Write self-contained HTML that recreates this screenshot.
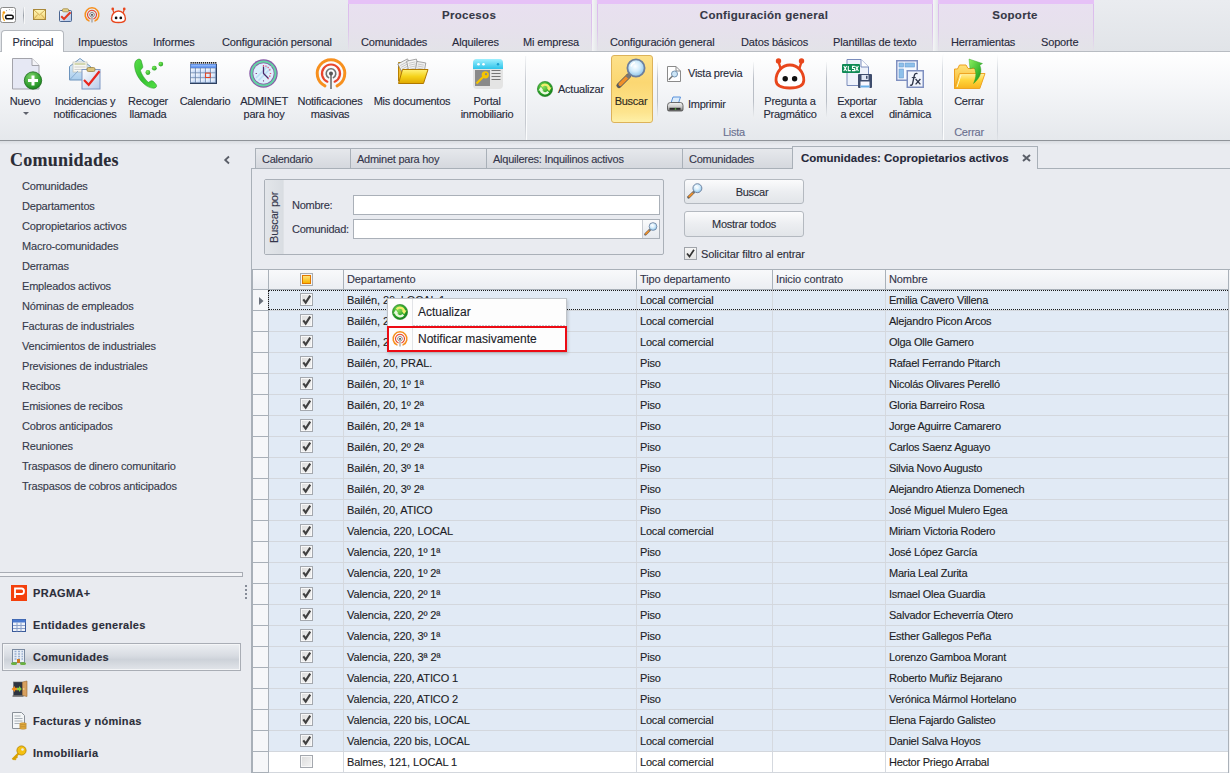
<!DOCTYPE html><html><head><meta charset="utf-8"><style>
*{box-sizing:border-box}
html,body{margin:0;padding:0}
body{width:1230px;height:773px;overflow:hidden;position:relative;background:#e9ebf0;font-family:"Liberation Sans",sans-serif;}
.t{position:absolute;white-space:nowrap;line-height:1;-webkit-text-stroke:0.12px currentColor}
.b{position:absolute;}
svg{position:absolute;overflow:visible}
</style></head><body>
<div class="b" style="left:0px;top:0px;width:1230px;height:51px;background:linear-gradient(#eaecf0,#e1e4e8)"></div>
<div class="b" style="left:0px;top:51px;width:1230px;height:1px;background:#b8bcc2"></div>
<div class="b" style="left:348px;top:0px;width:244px;height:51px;background:linear-gradient(#e9e0f1,#e6e1ec 60%,#e3e3e8)"></div>
<div class="b" style="left:348px;top:0px;width:1px;height:51px;background:linear-gradient(#dcb8ee,#dcc4ea 60%,rgba(220,200,234,0))"></div>
<div class="b" style="left:591px;top:0px;width:1px;height:51px;background:linear-gradient(#dcb8ee,#dcc4ea 60%,rgba(220,200,234,0))"></div>
<div class="b" style="left:348px;top:0px;width:244px;height:4px;background:#e6c1f7"></div>
<div class="t" style="left:319px;width:300px;text-align:center;top:10.26px;font-size:11.5px;color:#363846;font-weight:bold;letter-spacing:0.3px;">Procesos</div>
<div class="b" style="left:597px;top:0px;width:336px;height:51px;background:linear-gradient(#e9e0f1,#e6e1ec 60%,#e3e3e8)"></div>
<div class="b" style="left:597px;top:0px;width:1px;height:51px;background:linear-gradient(#dcb8ee,#dcc4ea 60%,rgba(220,200,234,0))"></div>
<div class="b" style="left:932px;top:0px;width:1px;height:51px;background:linear-gradient(#dcb8ee,#dcc4ea 60%,rgba(220,200,234,0))"></div>
<div class="b" style="left:597px;top:0px;width:336px;height:4px;background:#e6c1f7"></div>
<div class="t" style="left:614px;width:300px;text-align:center;top:10.26px;font-size:11.5px;color:#363846;font-weight:bold;letter-spacing:0.3px;">Configuración general</div>
<div class="b" style="left:938px;top:0px;width:156px;height:51px;background:linear-gradient(#e9e0f1,#e6e1ec 60%,#e3e3e8)"></div>
<div class="b" style="left:938px;top:0px;width:1px;height:51px;background:linear-gradient(#dcb8ee,#dcc4ea 60%,rgba(220,200,234,0))"></div>
<div class="b" style="left:1093px;top:0px;width:1px;height:51px;background:linear-gradient(#dcb8ee,#dcc4ea 60%,rgba(220,200,234,0))"></div>
<div class="b" style="left:938px;top:0px;width:156px;height:4px;background:#e6c1f7"></div>
<div class="t" style="left:865px;width:300px;text-align:center;top:10.26px;font-size:11.5px;color:#363846;font-weight:bold;letter-spacing:0.3px;">Soporte</div>
<div class="b" style="left:592px;top:0px;width:5px;height:51px;background:linear-gradient(90deg,#f4f5f6,#e4e6ea)"></div>
<div class="b" style="left:933px;top:0px;width:5px;height:51px;background:linear-gradient(90deg,#f4f5f6,#e4e6ea)"></div>
<div class="b" style="left:1px;top:30px;width:63px;height:22px;background:#fff;border:1px solid #b4b8be;border-bottom:none;border-radius:4px 4px 0 0"></div>
<div class="t " style="left:12.5px;top:36.68px;font-size:11px;color:#272a3c;font-weight:normal;letter-spacing:-0.15px;">Principal</div>
<div class="t " style="left:78px;top:36.68px;font-size:11px;color:#272a3c;font-weight:normal;letter-spacing:-0.15px;">Impuestos</div>
<div class="t " style="left:153px;top:36.68px;font-size:11px;color:#272a3c;font-weight:normal;letter-spacing:-0.15px;">Informes</div>
<div class="t " style="left:222px;top:36.68px;font-size:11px;color:#272a3c;font-weight:normal;letter-spacing:-0.15px;">Configuración personal</div>
<div class="t " style="left:361px;top:36.68px;font-size:11px;color:#272a3c;font-weight:normal;letter-spacing:-0.15px;">Comunidades</div>
<div class="t " style="left:452px;top:36.68px;font-size:11px;color:#272a3c;font-weight:normal;letter-spacing:-0.15px;">Alquileres</div>
<div class="t " style="left:523px;top:36.68px;font-size:11px;color:#272a3c;font-weight:normal;letter-spacing:-0.15px;">Mi empresa</div>
<div class="t " style="left:610px;top:36.68px;font-size:11px;color:#272a3c;font-weight:normal;letter-spacing:-0.15px;">Configuración general</div>
<div class="t " style="left:741px;top:36.68px;font-size:11px;color:#272a3c;font-weight:normal;letter-spacing:-0.15px;">Datos básicos</div>
<div class="t " style="left:833px;top:36.68px;font-size:11px;color:#272a3c;font-weight:normal;letter-spacing:-0.15px;">Plantillas de texto</div>
<div class="t " style="left:951px;top:36.68px;font-size:11px;color:#272a3c;font-weight:normal;letter-spacing:-0.15px;">Herramientas</div>
<div class="t " style="left:1041px;top:36.68px;font-size:11px;color:#272a3c;font-weight:normal;letter-spacing:-0.15px;">Soporte</div>
<div class="b" style="left:0px;top:52px;width:1230px;height:88px;background:linear-gradient(#ffffff 0%,#f6f7f9 35%,#e5e8ec 100%)"></div>
<div class="b" style="left:0px;top:140px;width:1230px;height:1px;background:#8f9399"></div>
<div class="b" style="left:0px;top:141px;width:1230px;height:4px;background:linear-gradient(#d9dce1,#e9ebf0)"></div>
<svg style="left:0px;top:7px" width="16" height="16" viewBox="0 0 16 16"><rect x="0.5" y="0.5" width="15" height="15" rx="2" fill="#fff" stroke="#8a8a8a"/><circle cx="3.9" cy="5.6" r="1.3" fill="#f29a12"/><path d="M3.2 6.5C2.4 9 2.8 11.5 4.6 13.8" stroke="#f4a61e" stroke-width="1.3" fill="none"/><rect x="5.6" y="8.2" width="7.6" height="3.6" rx="1.8" fill="none" stroke="#111" stroke-width="1.5"/><circle cx="6.5" cy="3.6" r="0.6" fill="#999"/><circle cx="9.4" cy="2.6" r="0.6" fill="#aaa"/><circle cx="12" cy="3.2" r="0.6" fill="#aaa"/><circle cx="13.5" cy="5.3" r="0.5" fill="#bbb"/></svg>
<div class="b" style="left:23px;top:7px;width:1px;height:17px;background:linear-gradient(#e4e6ea,#9aa0a8,#e4e6ea)"></div>
<div class="b" style="left:24px;top:7px;width:1px;height:17px;background:#f6f7f8"></div>
<svg style="left:33px;top:9px" width="13" height="11" viewBox="0 0 13 11"><defs><linearGradient id="env" x1="0" y1="0" x2="0" y2="1"><stop offset="0" stop-color="#fff8b8"/><stop offset="1" stop-color="#f2d478"/></linearGradient></defs><rect x="0.5" y="0.5" width="12" height="10" fill="url(#env)" stroke="#a8883a"/><path d="M0.8 0.8L6.5 6L12.2 0.8M0.8 10L4.8 5.5M12.2 10L8.2 5.5" stroke="#c9a04a" fill="none" stroke-width="0.9"/></svg>
<svg style="left:59px;top:8px" width="13" height="14" viewBox="0 0 13 14"><defs><linearGradient id="cbq" x1="0" y1="0" x2="1" y2="1"><stop offset="0" stop-color="#f8fbff"/><stop offset="1" stop-color="#aec3e6"/></linearGradient></defs><rect x="0.5" y="2.5" width="12" height="11" rx="1" fill="url(#cbq)" stroke="#4a6591"/><rect x="3.5" y="0.8" width="6" height="3" rx="1" fill="#e8d48a" stroke="#a08840" stroke-width="0.8"/><path d="M2.2 8.2L5 11L11.5 4.2" stroke="#e23a22" stroke-width="2" fill="none"/></svg>
<svg style="left:84px;top:7px" width="16" height="16" viewBox="0 0 16 16"><g transform="scale(0.5)"><path d="M9.95 27.90A13.8 13.8 0 1 1 22.05 27.90" fill="none" stroke="#f7901e" stroke-width="3" stroke-linecap="round"/><path d="M12.34 23.72A9 9 0 1 1 19.66 23.72" fill="none" stroke="#e8452c" stroke-width="2.2" stroke-linecap="round"/><path d="M13.60 19.66A4.8 4.8 0 1 1 18.40 19.66" fill="none" stroke="#707070" stroke-width="1.6" stroke-linecap="round"/><rect x="15" y="15.5" width="2" height="15.5" fill="#8a8a8a"/><circle cx="16" cy="15.5" r="2" fill="#555"/></g></svg>
<svg style="left:110px;top:7px" width="16" height="16" viewBox="0 0 16 16"><g transform="scale(0.5)"><path d="M5.6 5L7.6 11.5M28.4 5L26.4 11.5" stroke="#e8461c" stroke-width="2.4" fill="none"/><circle cx="5.5" cy="3.9" r="2.7" fill="#e8461c"/><circle cx="28.5" cy="3.9" r="2.7" fill="#e8461c"/><path d="M16.9 8C9 8 3 15 3 23.3C3 29 9.5 31 16.9 31C24.3 31 30.8 29 30.8 23.3C30.8 15 24.8 8 16.9 8Z" fill="#fff" stroke="#e8461c" stroke-width="2.8"/><circle cx="12.2" cy="21.8" r="2.7" fill="#111"/><circle cx="21.6" cy="21.8" r="2.7" fill="#111"/></g></svg>
<svg style="left:12px;top:58px" width="28" height="32" viewBox="0 0 28 32"><path d="M0.5 0.5H20L27 7.5V31H0.5Z" fill="#e6e8f4" stroke="#a3a3aa"/><path d="M20 0.5V7.5H27" fill="#f4f4f8" stroke="#a3a3aa"/><defs><radialGradient id="gp" cx="0.4" cy="0.3" r="0.8"><stop offset="0" stop-color="#7ed36a"/><stop offset="0.7" stop-color="#2b9a2b"/><stop offset="1" stop-color="#16701a"/></radialGradient></defs><circle cx="21" cy="22.5" r="8.7" fill="url(#gp)" stroke="#1f6a20" stroke-width="0.8"/><path d="M21 17.5V27.5M16 22.5H26" stroke="#fff" stroke-width="3"/></svg>
<div class="t" style="left:-125px;width:300px;text-align:center;top:95.68px;font-size:11px;color:#272a3a;font-weight:normal;letter-spacing:-0.25px;">Nuevo</div>
<svg style="left:22.5px;top:112px" width="6" height="4" viewBox="0 0 6 4"><path d="M0 0H6L3 3Z" fill="#5e626c"/></svg>
<svg style="left:69px;top:58px" width="32" height="32" viewBox="0 0 32 32"><defs><linearGradient id="ev2" x1="0" y1="0" x2="0" y2="1"><stop offset="0" stop-color="#eaf4fc"/><stop offset="1" stop-color="#a9cdec"/></linearGradient></defs><path d="M0.5 8.5L11 0.5L21.5 8.5V22H0.5Z" fill="url(#ev2)" stroke="#6c94bd"/><rect x="4" y="4" width="14" height="10" fill="#f7f7f2" stroke="#b8b8a8" stroke-width="0.6"/><path d="M5.5 6h11" stroke="#b0b870" stroke-width="1"/><path d="M5.5 9h11M5.5 11.5h11" stroke="#c8c8c8" stroke-width="0.8"/><path d="M0.5 22L9 13M21.5 22L13 13" stroke="#7aa0c8" stroke-width="0.8"/><g transform="translate(12.5,9)"><defs><linearGradient id="cbi" x1="0" y1="0" x2="1" y2="1"><stop offset="0" stop-color="#ffffff"/><stop offset="1" stop-color="#b8cbea"/></linearGradient></defs><rect x="0.5" y="2.5" width="18" height="19.5" fill="url(#cbi)" stroke="#7f98c4"/><rect x="5.5" y="0.5" width="8" height="4" rx="1.5" fill="#d9c27a" stroke="#9a8040" stroke-width="0.8"/><path d="M2.5 13L7.2 17.8L18 4.2" stroke="#e8261e" stroke-width="2.2" fill="none"/></g></svg>
<div class="t" style="left:-65px;width:300px;text-align:center;top:95.68px;font-size:11px;color:#272a3a;font-weight:normal;letter-spacing:-0.25px;">Incidencias y</div>
<div class="t" style="left:-65px;width:300px;text-align:center;top:108.68px;font-size:11px;color:#272a3a;font-weight:normal;letter-spacing:-0.25px;">notificaciones</div>
<svg style="left:133px;top:58px" width="32" height="32" viewBox="0 0 32 32"><defs><linearGradient id="ph" x1="0" y1="0" x2="1" y2="1"><stop offset="0" stop-color="#5ae04a"/><stop offset="0.5" stop-color="#34c030"/><stop offset="1" stop-color="#52e046"/></linearGradient><radialGradient id="pd" cx="0.4" cy="0.35" r="0.7"><stop offset="0" stop-color="#7aea5a"/><stop offset="1" stop-color="#22a020"/></radialGradient></defs><path d="M5.2 1.2C2.8 1.8 1.4 4.5 1.6 8C1.9 14 5.5 21.5 11.8 26.6C15.2 29.4 19.6 30.8 22 29.9C23.8 29.2 24 27.6 23.1 26.4L20.6 23.6C19.6 22.6 18.3 22.5 17.3 23.2L15.4 24.3C12 21.6 8.3 16 7.3 12.2L8.6 11C9.8 10.2 10 8.8 9.6 7.5L8.2 2.6C7.7 1.4 6.6 0.9 5.2 1.2Z" fill="url(#ph)" stroke="#1e8a1e" stroke-width="0.5"/><circle cx="14.9" cy="14.5" r="2.4" fill="url(#pd)"/><circle cx="21.3" cy="10.2" r="2.4" fill="url(#pd)"/><circle cx="27.8" cy="6.1" r="2.4" fill="url(#pd)"/></svg>
<div class="t" style="left:-2px;width:300px;text-align:center;top:95.68px;font-size:11px;color:#272a3a;font-weight:normal;letter-spacing:-0.25px;">Recoger</div>
<div class="t" style="left:-2px;width:300px;text-align:center;top:108.68px;font-size:11px;color:#272a3a;font-weight:normal;letter-spacing:-0.25px;">llamada</div>
<svg style="left:190px;top:62px" width="27" height="22" viewBox="0 0 27 22"><defs><linearGradient id="cell" x1="0" y1="0" x2="1" y2="1"><stop offset="0" stop-color="#ffffff"/><stop offset="1" stop-color="#b8d0f4"/></linearGradient></defs><rect x="0" y="1.8" width="27" height="20.2" fill="#6a82a6"/><rect x="0" y="21" width="27" height="1" fill="#2e4060"/><rect x="26" y="2" width="1" height="20" fill="#2e4060"/><rect x="0.6" y="2.2" width="25.6" height="3.6" fill="#5a8ff0"/><rect x="1.2" y="2.8" width="24.4" height="1.6" fill="#8ab4f8"/><rect x="0.50" y="0" width="1.3" height="1.6" fill="#1a1a1a"/><rect x="2.55" y="0" width="1.3" height="1.6" fill="#1a1a1a"/><rect x="4.60" y="0" width="1.3" height="1.6" fill="#1a1a1a"/><rect x="6.65" y="0" width="1.3" height="1.6" fill="#1a1a1a"/><rect x="8.70" y="0" width="1.3" height="1.6" fill="#1a1a1a"/><rect x="10.75" y="0" width="1.3" height="1.6" fill="#1a1a1a"/><rect x="12.80" y="0" width="1.3" height="1.6" fill="#1a1a1a"/><rect x="14.85" y="0" width="1.3" height="1.6" fill="#1a1a1a"/><rect x="16.90" y="0" width="1.3" height="1.6" fill="#1a1a1a"/><rect x="18.95" y="0" width="1.3" height="1.6" fill="#1a1a1a"/><rect x="21.00" y="0" width="1.3" height="1.6" fill="#1a1a1a"/><rect x="23.05" y="0" width="1.3" height="1.6" fill="#1a1a1a"/><rect x="25.10" y="0" width="1.3" height="1.6" fill="#1a1a1a"/><rect x="0.90" y="6.40" width="4.3" height="4.1" fill="url(#cell)"/><rect x="5.92" y="6.40" width="4.3" height="4.1" fill="url(#cell)"/><rect x="10.94" y="6.40" width="4.3" height="4.1" fill="url(#cell)"/><rect x="15.96" y="6.40" width="4.3" height="4.1" fill="url(#cell)"/><rect x="20.98" y="6.40" width="4.3" height="4.1" fill="url(#cell)"/><rect x="0.90" y="11.30" width="4.3" height="4.1" fill="url(#cell)"/><rect x="5.92" y="11.30" width="4.3" height="4.1" fill="url(#cell)"/><rect x="10.94" y="11.30" width="4.3" height="4.1" fill="url(#cell)"/><rect x="15.96" y="11.30" width="4.3" height="4.1" fill="url(#cell)"/><rect x="20.98" y="11.30" width="4.3" height="4.1" fill="url(#cell)"/><rect x="0.90" y="16.20" width="4.3" height="4.1" fill="url(#cell)"/><rect x="5.92" y="16.20" width="4.3" height="4.1" fill="url(#cell)"/><rect x="10.94" y="16.20" width="4.3" height="4.1" fill="url(#cell)"/><rect x="15.96" y="16.20" width="4.3" height="4.1" fill="url(#cell)"/><rect x="20.98" y="16.20" width="4.3" height="4.1" fill="url(#cell)"/><rect x="15.6" y="11.1" width="4.6" height="4.4" fill="none" stroke="#e8401a" stroke-width="1"/></svg>
<div class="t" style="left:55px;width:300px;text-align:center;top:95.68px;font-size:11px;color:#272a3a;font-weight:normal;letter-spacing:-0.25px;">Calendario</div>
<svg style="left:249px;top:59px" width="29" height="29" viewBox="0 0 29 29"><circle cx="14.5" cy="14.5" r="14.2" fill="#8a5aa8"/><circle cx="14.5" cy="14.5" r="13" fill="#62d6a4"/><circle cx="14.5" cy="14.5" r="11" fill="#8a5aa8"/><circle cx="14.5" cy="14.5" r="10.2" fill="#dcf0fc"/><path d="M7 19L19 7M9.5 21.5L21.5 9.5" stroke="#bcdcf4" stroke-width="1.6"/><path d="M14.5 7.5V14.5L19.5 19.5" stroke="#4a2a6a" stroke-width="1.3" fill="none"/><path d="M14.5 6v1.6M17.2 6.6l-0.5 1.2M19.6 8.2l-0.9 0.9M21.4 10.6l-1.2 0.5M22.2 14.5h-1.4M21.4 17.4l-1.2 -0.5M19.6 20.2l-0.9 -0.9" stroke="#e84a78" stroke-width="1.2"/><path d="M6.6 14.5h1.4M14.5 21.2v1.4" stroke="#8a4a8a" stroke-width="1.1"/></svg>
<div class="t" style="left:114px;width:300px;text-align:center;top:95.68px;font-size:11px;color:#272a3a;font-weight:normal;letter-spacing:-0.25px;">ADMINET</div>
<div class="t" style="left:114px;width:300px;text-align:center;top:108.68px;font-size:11px;color:#272a3a;font-weight:normal;letter-spacing:-0.25px;">para hoy</div>
<svg style="left:315px;top:58px" width="32" height="32" viewBox="0 0 32 32"><g transform="scale(1.0)"><path d="M9.95 27.90A13.8 13.8 0 1 1 22.05 27.90" fill="none" stroke="#f7901e" stroke-width="3" stroke-linecap="round"/><path d="M12.34 23.72A9 9 0 1 1 19.66 23.72" fill="none" stroke="#e8452c" stroke-width="2.2" stroke-linecap="round"/><path d="M13.60 19.66A4.8 4.8 0 1 1 18.40 19.66" fill="none" stroke="#707070" stroke-width="1.6" stroke-linecap="round"/><rect x="15" y="15.5" width="2" height="15.5" fill="#8a8a8a"/><circle cx="16" cy="15.5" r="2" fill="#555"/></g></svg>
<div class="t" style="left:180px;width:300px;text-align:center;top:95.68px;font-size:11px;color:#272a3a;font-weight:normal;letter-spacing:-0.25px;">Notificaciones</div>
<div class="t" style="left:180px;width:300px;text-align:center;top:108.68px;font-size:11px;color:#272a3a;font-weight:normal;letter-spacing:-0.25px;">masivas</div>
<svg style="left:397px;top:59px" width="32" height="26" viewBox="0 0 32 26"><defs><linearGradient id="fold" x1="0" y1="0" x2="0" y2="1"><stop offset="0" stop-color="#fff27a"/><stop offset="0.5" stop-color="#f5d21a"/><stop offset="1" stop-color="#e0a800"/></linearGradient></defs><path d="M1.5 3.5H8L10 5.5H17V22H1.5Z" fill="#f0c030" stroke="#b88000"/><g transform="rotate(-28 8 8)"><rect x="3" y="2" width="11" height="13" fill="#f2f2f2" stroke="#8a8a8a" stroke-width="0.7"/><path d="M4.5 4.5h8M4.5 6.5h8M4.5 8.5h8M4.5 10.5h8" stroke="#b0b0b0" stroke-width="0.6"/></g><g transform="rotate(-12 16 8)"><rect x="11" y="1" width="10" height="13" fill="#f6f6f6" stroke="#8a8a8a" stroke-width="0.7"/><path d="M12.5 3.5h7M12.5 5.5h7M12.5 7.5h7M12.5 9.5h7" stroke="#b0b0b0" stroke-width="0.6"/></g><g transform="rotate(10 23 8)"><rect x="19" y="3" width="9" height="11" fill="#f0f0f0" stroke="#8a8a8a" stroke-width="0.7"/><path d="M20.5 5.5h6M20.5 7.5h6M20.5 9.5h6" stroke="#b0b0b0" stroke-width="0.6"/></g><path d="M5.5 10.5H31L26.5 24.5H1.5Z" fill="url(#fold)" stroke="#b07800" stroke-width="1"/></svg>
<div class="t" style="left:262px;width:300px;text-align:center;top:95.68px;font-size:11px;color:#272a3a;font-weight:normal;letter-spacing:-0.25px;">Mis documentos</div>
<svg style="left:473px;top:59px" width="30" height="30" viewBox="0 0 30 30"><defs><linearGradient id="ptop" x1="0" y1="0" x2="0" y2="1"><stop offset="0" stop-color="#9ef0ff"/><stop offset="1" stop-color="#2ec4ea"/></linearGradient></defs><rect x="0" y="0" width="30" height="30" rx="4" fill="#e4e4e4"/><path d="M0 4A4 4 0 0 1 4 0H26A4 4 0 0 1 30 4V10H0Z" fill="url(#ptop)"/><circle cx="5.5" cy="5.2" r="1.3" fill="#fff"/><circle cx="10.5" cy="5.2" r="1.3" fill="#fff"/><circle cx="25" cy="5.2" r="1.2" fill="#1aa0d0"/><rect x="2" y="11" width="15" height="16" fill="#8a8a8a"/><path d="M18.5 11.5h9M18.5 14.5h9M18.5 17.5h9M18.5 20.5h9" stroke="#666" stroke-width="0.9"/><circle cx="12.3" cy="15.8" r="3.6" fill="#f5c400"/><circle cx="13" cy="15.2" r="1.1" fill="#8a8a8a"/><path d="M10 18L3.5 24.5" stroke="#f5c400" stroke-width="2.2"/></svg>
<div class="t" style="left:337px;width:300px;text-align:center;top:95.68px;font-size:11px;color:#272a3a;font-weight:normal;letter-spacing:-0.25px;">Portal</div>
<div class="t" style="left:337px;width:300px;text-align:center;top:108.68px;font-size:11px;color:#272a3a;font-weight:normal;letter-spacing:-0.25px;">inmobiliario</div>
<div class="b" style="left:525px;top:56px;width:1px;height:84px;background:linear-gradient(#f4f5f7,#c6cad0 30%,#c6cad0 80%,#e0e3e7)"></div>
<div class="b" style="left:526px;top:56px;width:1px;height:84px;background:#fbfcfd"></div>
<svg style="left:537px;top:81px" width="16" height="16" viewBox="0 0 16 16"><g transform="scale(1.0)"><defs><radialGradient id="rga" cx="0.4" cy="0.35" r="0.7"><stop offset="0" stop-color="#8be05a"/><stop offset="0.6" stop-color="#2da52a"/><stop offset="1" stop-color="#137a1a"/></radialGradient></defs><circle cx="8" cy="8" r="7.6" fill="url(#rga)" stroke="#1d7a1d" stroke-width="0.6"/><path d="M4.6 5.2A4.4 4.4 0 0 1 12.2 7.2" stroke="#f2ee70" stroke-width="2.3" fill="none"/><path d="M9.6 6.6H14.6L12.1 10.2Z" fill="#f2ee70"/><path d="M11.4 10.8A4.4 4.4 0 0 1 3.8 8.8" stroke="#eaf8dc" stroke-width="2.3" fill="none"/><path d="M6.4 9.4H1.4L3.9 5.8Z" fill="#eaf8dc"/></g></svg>
<div class="t " style="left:558px;top:83.68px;font-size:11px;color:#272a3a;font-weight:normal;letter-spacing:-0.25px;">Actualizar</div>
<div class="b" style="left:611px;top:55px;width:42px;height:68px;background:linear-gradient(#fde18a,#fbd772 40%,#fde48e 85%,#fef0a8);border:1px solid #dcb25a;border-radius:3px"></div>
<svg style="left:616px;top:58px" width="30" height="30" viewBox="0 0 30 30"><g transform="scale(1.0)"><defs><radialGradient id="lgb" cx="0.45" cy="0.4" r="0.6"><stop offset="0" stop-color="#ffffff"/><stop offset="0.5" stop-color="#d3ecfb"/><stop offset="1" stop-color="#8cc4ea"/></radialGradient></defs><path d="M3 27.5L12.5 18" stroke="#5a5a5a" stroke-width="5.2" stroke-linecap="round"/><path d="M4.2 26.3L12 18.5" stroke="#f0902a" stroke-width="3.6" stroke-linecap="round"/><path d="M11 19.5L14 16.5" stroke="#777" stroke-width="3.5"/><circle cx="20" cy="10" r="8.6" fill="url(#lgb)" stroke="#6d7f9c" stroke-width="1.8"/><path d="M15 8.5A5.5 5.5 0 0 1 19 4.6" stroke="#fff" stroke-width="1.5" fill="none"/></g></svg>
<div class="t" style="left:481px;width:300px;text-align:center;top:95.68px;font-size:11px;color:#2e2a20;font-weight:normal;letter-spacing:-0.25px;">Buscar</div>
<div class="b" style="left:657px;top:62px;width:1px;height:56px;background:linear-gradient(#f7f8f9,#b9bec6 30%,#b9bec6 70%,#eef0f2)"></div>
<svg style="left:667px;top:66px" width="14" height="16" viewBox="0 0 14 16"><path d="M0.5 0.5H9L13.5 5V15.5H0.5Z" fill="#fff" stroke="#8a8a8a"/><path d="M9 0.5V5H13.5" fill="none" stroke="#8a8a8a"/><circle cx="7.5" cy="8" r="3" fill="#cde6f7" stroke="#6a8aaa" stroke-width="0.9"/><path d="M5.5 10L1.8 13.8" stroke="#777" stroke-width="1.4"/></svg>
<div class="t " style="left:688px;top:68.18px;font-size:11px;color:#272a3a;font-weight:normal;letter-spacing:-0.25px;">Vista previa</div>
<svg style="left:666px;top:96px" width="18" height="16" viewBox="0 0 18 16"><defs><linearGradient id="prb" x1="0" y1="0" x2="0" y2="1"><stop offset="0" stop-color="#f4f4f4"/><stop offset="0.55" stop-color="#c8c8c8"/><stop offset="1" stop-color="#6a6a6a"/></linearGradient></defs><path d="M7 1H14.5L12 8.5H4.5Z" fill="#dcecfb" stroke="#4a88d8" stroke-width="0.9"/><path d="M1.5 9.5Q1.5 6.5 4.5 6.5H14.5Q17 6.5 17 9.5V13.5Q17 15 15.5 15H3Q1.5 15 1.5 13.5Z" fill="url(#prb)" stroke="#4a4a4a" stroke-width="0.8"/><rect x="3.5" y="11.8" width="11" height="2" fill="#2a2a2a"/><circle cx="9.5" cy="13" r="0.8" fill="#5ad040"/></svg>
<div class="t " style="left:688px;top:98.68px;font-size:11px;color:#272a3a;font-weight:normal;letter-spacing:-0.25px;">Imprimir</div>
<div class="b" style="left:753px;top:62px;width:1px;height:56px;background:linear-gradient(#f7f8f9,#b9bec6 30%,#b9bec6 70%,#eef0f2)"></div>
<svg style="left:773px;top:57px" width="33" height="33" viewBox="0 0 33 33"><g transform="scale(1.0)"><path d="M5.6 5L7.6 11.5M28.4 5L26.4 11.5" stroke="#e8461c" stroke-width="2.4" fill="none"/><circle cx="5.5" cy="3.9" r="2.7" fill="#e8461c"/><circle cx="28.5" cy="3.9" r="2.7" fill="#e8461c"/><path d="M16.9 8C9 8 3 15 3 23.3C3 29 9.5 31 16.9 31C24.3 31 30.8 29 30.8 23.3C30.8 15 24.8 8 16.9 8Z" fill="#fff" stroke="#e8461c" stroke-width="2.8"/><circle cx="12.2" cy="21.8" r="2.7" fill="#111"/><circle cx="21.6" cy="21.8" r="2.7" fill="#111"/></g></svg>
<div class="t" style="left:640px;width:300px;text-align:center;top:95.68px;font-size:11px;color:#272a3a;font-weight:normal;letter-spacing:-0.25px;">Pregunta a</div>
<div class="t" style="left:640px;width:300px;text-align:center;top:108.68px;font-size:11px;color:#272a3a;font-weight:normal;letter-spacing:-0.25px;">Pragmático</div>
<div class="b" style="left:826px;top:62px;width:1px;height:56px;background:linear-gradient(#f7f8f9,#b9bec6 30%,#b9bec6 70%,#eef0f2)"></div>
<svg style="left:842px;top:59px" width="31" height="29" viewBox="0 0 31 29"><path d="M5 0.5H19L26.5 8V26.5H5Z" fill="#eef2fb" stroke="#7a8cbc"/><path d="M19 0.5V8H26.5" fill="#fff" stroke="#7a8cbc"/><rect x="0" y="5" width="18" height="9" rx="1" fill="#0f8a55"/><path d="M1.8 7L4.6 12M4.6 7L1.8 12M6.3 7V11.6H8.8M12.8 7.4H10.5V9.5H12.6V11.6H10" stroke="#fff" stroke-width="1.1" fill="none"/><path d="M13.6 7L16.4 12M16.4 7L13.6 12" stroke="#fff" stroke-width="1.1"/><rect x="16" y="15" width="14" height="14" rx="1" fill="#3e4c6c"/><rect x="18.5" y="22.5" width="9" height="6.5" fill="#f8f8ff"/><rect x="18.5" y="26.5" width="9" height="2" fill="#6ab0e8"/><rect x="19.5" y="16" width="7" height="5" fill="#dfe6f5"/><rect x="24" y="16.8" width="1.5" height="3" fill="#3e4c6c"/></svg>
<div class="t" style="left:707px;width:300px;text-align:center;top:95.68px;font-size:11px;color:#272a3a;font-weight:normal;letter-spacing:-0.25px;">Exportar</div>
<div class="t" style="left:707px;width:300px;text-align:center;top:108.68px;font-size:11px;color:#272a3a;font-weight:normal;letter-spacing:-0.25px;">a excel</div>
<svg style="left:896px;top:60px" width="28" height="28" viewBox="0 0 28 28"><rect x="0.75" y="0.75" width="20.5" height="19.5" fill="#f6f9ff" stroke="#7f90c0" stroke-width="1.5"/><rect x="3" y="3" width="4.5" height="4" fill="#8ec0ea" stroke="#6a9ad0" stroke-width="0.6"/><rect x="9" y="3" width="9.5" height="4" fill="#8ec0ea" stroke="#6a9ad0" stroke-width="0.6"/><rect x="3" y="9" width="4.5" height="9" fill="#8ec0ea" stroke="#6a9ad0" stroke-width="0.6"/><rect x="11.25" y="10.75" width="16" height="16.5" fill="#f2f5fc" stroke="#7f90c0" stroke-width="1.5"/><path d="M21.5 13.6C19.5 12.8 18.6 14 18.2 16L16.6 23.5C16.2 25.2 15.2 25.6 14 25" stroke="#2e3448" stroke-width="1.3" fill="none"/><path d="M15.8 17.6H19.8" stroke="#2e3448" stroke-width="1"/><path d="M19.6 19L24.4 24.4M24.4 19L19.6 24.4" stroke="#2e3448" stroke-width="1.3"/></svg>
<div class="t" style="left:760px;width:300px;text-align:center;top:95.68px;font-size:11px;color:#272a3a;font-weight:normal;letter-spacing:-0.25px;">Tabla</div>
<div class="t" style="left:760px;width:300px;text-align:center;top:108.68px;font-size:11px;color:#272a3a;font-weight:normal;letter-spacing:-0.25px;">dinámica</div>
<div class="t" style="left:584px;width:300px;text-align:center;top:127.18px;font-size:11px;color:#6a7090;font-weight:normal;letter-spacing:-0.25px;">Lista</div>
<div class="b" style="left:942px;top:54px;width:1px;height:86px;background:linear-gradient(#ffffff,#d4d8de 20%,#d4d8de 90%,#e0e3e7)"></div>
<div class="b" style="left:943px;top:54px;width:1px;height:86px;background:#fcfdfe"></div>
<svg style="left:953px;top:58px" width="32" height="32" viewBox="0 0 32 32"><defs><linearGradient id="fold2" x1="0" y1="0" x2="0" y2="1"><stop offset="0" stop-color="#fff0a0"/><stop offset="0.45" stop-color="#ffd43a"/><stop offset="1" stop-color="#f7b41e"/></linearGradient><linearGradient id="fb2" x1="0" y1="0" x2="0" y2="1"><stop offset="0" stop-color="#ffe27a"/><stop offset="1" stop-color="#f5b020"/></linearGradient><linearGradient id="arr" x1="0" y1="0" x2="1" y2="1"><stop offset="0" stop-color="#8ef060"/><stop offset="0.6" stop-color="#3ab830"/><stop offset="1" stop-color="#137a16"/></linearGradient></defs><path d="M1.5 30.5V11H4.5L6.5 7H13L15 10.5H23V30.5Z" fill="url(#fb2)" stroke="#eea020" stroke-width="1"/><path d="M6.5 15.5H32L26.8 30.5H1.5Z" fill="url(#fold2)" stroke="#eea424" stroke-width="1"/><path d="M4 29L8 17" stroke="#fff8d0" stroke-width="1"/><path d="M16 1L29.5 5.5L26.8 7.2C29 12 28.5 19 20.5 25.5C23.5 19 23.5 13.5 21 9.8L17 10.8Z" fill="url(#arr)" stroke="#2a9a20" stroke-width="0.4"/></svg>
<div class="t" style="left:819px;width:300px;text-align:center;top:95.68px;font-size:11px;color:#272a3a;font-weight:normal;letter-spacing:-0.25px;">Cerrar</div>
<div class="t" style="left:819px;width:300px;text-align:center;top:127.18px;font-size:11px;color:#6a7090;font-weight:normal;letter-spacing:-0.25px;">Cerrar</div>
<div class="b" style="left:997px;top:54px;width:1px;height:86px;background:linear-gradient(#ffffff,#d4d8de 20%,#d4d8de 90%,#e0e3e7)"></div>
<div class="t " style="left:10px;top:150.76px;font-size:18px;color:#2a2c36;font-weight:bold;letter-spacing:0.25px;font-family:'Liberation Serif',serif">Comunidades</div>
<svg style="left:224px;top:156px" width="6" height="8" viewBox="0 0 6 8"><path d="M5 0.5L1.2 4L5 7.5" stroke="#5a5e68" stroke-width="1.8" fill="none"/></svg>
<div class="t " style="left:22px;top:180.68px;font-size:11px;color:#363a4a;font-weight:normal;letter-spacing:-0.2px;">Comunidades</div>
<div class="t " style="left:22px;top:200.68px;font-size:11px;color:#363a4a;font-weight:normal;letter-spacing:-0.2px;">Departamentos</div>
<div class="t " style="left:22px;top:220.68px;font-size:11px;color:#363a4a;font-weight:normal;letter-spacing:-0.2px;">Copropietarios activos</div>
<div class="t " style="left:22px;top:240.68px;font-size:11px;color:#363a4a;font-weight:normal;letter-spacing:-0.2px;">Macro-comunidades</div>
<div class="t " style="left:22px;top:260.68px;font-size:11px;color:#363a4a;font-weight:normal;letter-spacing:-0.2px;">Derramas</div>
<div class="t " style="left:22px;top:280.68px;font-size:11px;color:#363a4a;font-weight:normal;letter-spacing:-0.2px;">Empleados activos</div>
<div class="t " style="left:22px;top:300.68px;font-size:11px;color:#363a4a;font-weight:normal;letter-spacing:-0.2px;">Nóminas de empleados</div>
<div class="t " style="left:22px;top:320.68px;font-size:11px;color:#363a4a;font-weight:normal;letter-spacing:-0.2px;">Facturas de industriales</div>
<div class="t " style="left:22px;top:340.68px;font-size:11px;color:#363a4a;font-weight:normal;letter-spacing:-0.2px;">Vencimientos de industriales</div>
<div class="t " style="left:22px;top:360.68px;font-size:11px;color:#363a4a;font-weight:normal;letter-spacing:-0.2px;">Previsiones de industriales</div>
<div class="t " style="left:22px;top:380.68px;font-size:11px;color:#363a4a;font-weight:normal;letter-spacing:-0.2px;">Recibos</div>
<div class="t " style="left:22px;top:400.68px;font-size:11px;color:#363a4a;font-weight:normal;letter-spacing:-0.2px;">Emisiones de recibos</div>
<div class="t " style="left:22px;top:420.68px;font-size:11px;color:#363a4a;font-weight:normal;letter-spacing:-0.2px;">Cobros anticipados</div>
<div class="t " style="left:22px;top:440.68px;font-size:11px;color:#363a4a;font-weight:normal;letter-spacing:-0.2px;">Reuniones</div>
<div class="t " style="left:22px;top:460.68px;font-size:11px;color:#363a4a;font-weight:normal;letter-spacing:-0.2px;">Traspasos de dinero comunitario</div>
<div class="t " style="left:22px;top:480.68px;font-size:11px;color:#363a4a;font-weight:normal;letter-spacing:-0.2px;">Traspasos de cobros anticipados</div>
<div class="b" style="left:0px;top:572px;width:243px;height:5px;background:#f2f3f6;border:1px solid #a8acb4;border-left:none"></div>
<div class="b" style="left:245px;top:585px;width:2px;height:2px;background:#868c98"></div>
<div class="b" style="left:245px;top:589px;width:2px;height:2px;background:#868c98"></div>
<div class="b" style="left:245px;top:593px;width:2px;height:2px;background:#868c98"></div>
<div class="b" style="left:245px;top:597px;width:2px;height:2px;background:#868c98"></div>
<div class="b" style="left:2px;top:643px;width:239px;height:28px;background:linear-gradient(#eceef2,#d8dce2 45%,#cdd2d9 60%,#e2e5ea);border:1px solid #a9adb5;box-shadow:inset 0 0 0 1px #f4f5f7"></div>
<div class="t " style="left:33px;top:587.68px;font-size:11px;color:#2c2e3a;font-weight:bold;letter-spacing:0.3px;">PRAGMA+</div>
<div class="t " style="left:33px;top:619.68px;font-size:11px;color:#2c2e3a;font-weight:bold;letter-spacing:0.3px;">Entidades generales</div>
<div class="t " style="left:33px;top:651.68px;font-size:11px;color:#2c2e3a;font-weight:bold;letter-spacing:0.3px;">Comunidades</div>
<div class="t " style="left:33px;top:683.68px;font-size:11px;color:#2c2e3a;font-weight:bold;letter-spacing:0.3px;">Alquileres</div>
<div class="t " style="left:33px;top:715.68px;font-size:11px;color:#2c2e3a;font-weight:bold;letter-spacing:0.3px;">Facturas y nóminas</div>
<div class="t " style="left:33px;top:747.68px;font-size:11px;color:#2c2e3a;font-weight:bold;letter-spacing:0.3px;">Inmobiliaria</div>
<svg style="left:11px;top:585px" width="16" height="16" viewBox="0 0 16 16"><rect width="16" height="16" fill="#f4400c"/><path d="M4 13V3.5H10.5C12.5 3.5 13 4.5 13 6.2C13 8 12.5 9 10.5 9H4" stroke="#fff" stroke-width="1.8" fill="none"/></svg>
<svg style="left:12px;top:619px" width="14" height="13" viewBox="0 0 14 13"><rect x="0.5" y="0.5" width="13" height="12" fill="#eef2fa" stroke="#3a5a9a"/><rect x="0.5" y="0.5" width="13" height="3" fill="#4a7ad0"/><path d="M1 6.5H13M1 9.5H13M5 3.5V12.5M9 3.5V12.5" stroke="#8aa0c8" stroke-width="1"/></svg>
<svg style="left:11px;top:649px" width="15" height="16" viewBox="0 0 15 16"><rect x="1.5" y="0.5" width="12" height="13" fill="#e8eef6" stroke="#7a8aa0"/><path d="M3.5 2.5h2M7 2.5h2M10.5 2.5h1.5M3.5 5h2M7 5h2M10.5 5h1.5M3.5 7.5h2M7 7.5h2M10.5 7.5h1.5M3.5 10h2M7 10h2M10.5 10h1.5" stroke="#9ab0d0" stroke-width="1.4"/><rect x="6" y="10" width="3" height="4" fill="#d07a20"/><ellipse cx="3" cy="14.5" rx="3" ry="1.6" fill="#6ab040"/><ellipse cx="12" cy="14.5" rx="3" ry="1.6" fill="#6ab040"/></svg>
<svg style="left:11px;top:681px" width="16" height="16" viewBox="0 0 16 16"><rect x="2.5" y="1" width="9" height="13.5" fill="#2e3440" stroke="#6a6a6a" stroke-width="0.6"/><path d="M11.5 1L16 0V15.5L11.5 14.5Z" fill="#d8a060" stroke="#9a6a30" stroke-width="0.6"/><circle cx="12.8" cy="8" r="0.7" fill="#fff0a0"/><path d="M0.5 8L4 5V6.8H6.5V9.2H4V11Z" fill="#f08a1a"/><path d="M6 6.8H8V5L10.8 8L8 11V9.2H6Z" fill="#8ad040"/><rect x="1.5" y="14.5" width="11" height="1.2" fill="#5a5a5a"/></svg>
<svg style="left:12px;top:712px" width="15" height="17" viewBox="0 0 15 17"><path d="M0.5 0.5H9.5L12.5 3.5V16.5H0.5Z" fill="#f4f6f8" stroke="#8a9098"/><path d="M2.5 4h6M2.5 6.5h8M2.5 9h8M2.5 11.5h5" stroke="#a0a8b0" stroke-width="0.9"/><ellipse cx="11" cy="12" rx="3.5" ry="1.3" fill="#e8b040" stroke="#a07020" stroke-width="0.5"/><ellipse cx="11" cy="14" rx="3.5" ry="1.3" fill="#e8b040" stroke="#a07020" stroke-width="0.5"/><ellipse cx="11" cy="16" rx="3.5" ry="1.2" fill="#e8b040" stroke="#a07020" stroke-width="0.5"/></svg>
<svg style="left:11px;top:745px" width="16" height="16" viewBox="0 0 16 16"><circle cx="10.5" cy="5.5" r="4.6" fill="#f5c010" stroke="#b08000" stroke-width="0.8"/><circle cx="11.5" cy="4.5" r="1.3" fill="#e9ebf0"/><path d="M7.5 8.5L1.5 14.5M3 13l1.8 1.8M4.8 11.2l1.5 1.5" stroke="#d8a000" stroke-width="2.2"/></svg>
<div class="b" style="left:251px;top:168px;width:979px;height:1px;background:#a9b0b8"></div>
<div class="b" style="left:255px;top:148px;width:96px;height:21px;background:linear-gradient(#e6e8ec,#d5d8de);border:1px solid #a9b0b8"></div>
<div class="t " style="left:262px;top:153.68px;font-size:11px;color:#33354a;font-weight:normal;letter-spacing:-0.25px;">Calendario</div>
<div class="b" style="left:350px;top:148px;width:137px;height:21px;background:linear-gradient(#e6e8ec,#d5d8de);border:1px solid #a9b0b8"></div>
<div class="t " style="left:357px;top:153.68px;font-size:11px;color:#33354a;font-weight:normal;letter-spacing:-0.25px;">Adminet para hoy</div>
<div class="b" style="left:486px;top:148px;width:197px;height:21px;background:linear-gradient(#e6e8ec,#d5d8de);border:1px solid #a9b0b8"></div>
<div class="t " style="left:493px;top:153.68px;font-size:11px;color:#33354a;font-weight:normal;letter-spacing:-0.25px;">Alquileres: Inquilinos activos</div>
<div class="b" style="left:682px;top:148px;width:111px;height:21px;background:linear-gradient(#e6e8ec,#d5d8de);border:1px solid #a9b0b8"></div>
<div class="t " style="left:689px;top:153.68px;font-size:11px;color:#33354a;font-weight:normal;letter-spacing:-0.25px;">Comunidades</div>
<div class="b" style="left:792px;top:146px;width:246px;height:23px;background:#e9ebf0;border:1px solid #a9b0b8;border-bottom:none"></div>
<div class="t " style="left:801px;top:153.26px;font-size:11.5px;color:#26283a;font-weight:bold;letter-spacing:0px;">Comunidades: Copropietarios activos</div>
<svg style="left:1022px;top:154px" width="9" height="8" viewBox="0 0 9 8"><path d="M1 1L8 7M8 1L1 7" stroke="#5a5e68" stroke-width="2"/></svg>
<div class="b" style="left:251px;top:168px;width:1px;height:605px;background:#a9b0b8"></div>
<div class="b" style="left:264px;top:179px;width:400px;height:76px;border:1px solid #aab0b8;border-radius:2px"></div>
<div class="b" style="left:265px;top:180px;width:19px;height:74px;background:linear-gradient(90deg,#e3e6ea,#d9dde2);border-right:1px solid #dfe2e6"></div>
<div class="t" style="left:266px;top:193px;width:16px;height:50px;font-size:11px;color:#33354a;writing-mode:vertical-rl;transform:rotate(180deg);letter-spacing:-0.2px;line-height:16px;text-align:left">Buscar por</div>
<div class="t " style="left:292px;top:199.68px;font-size:11px;color:#33354a;font-weight:normal;letter-spacing:-0.25px;">Nombre:</div>
<div class="t " style="left:292px;top:223.68px;font-size:11px;color:#33354a;font-weight:normal;letter-spacing:-0.25px;">Comunidad:</div>
<div class="b" style="left:353px;top:195px;width:307px;height:20px;background:#fff;border:1px solid #aab0b8"></div>
<div class="b" style="left:353px;top:219px;width:307px;height:20px;background:#fff;border:1px solid #aab0b8"></div>
<div class="b" style="left:642px;top:220px;width:17px;height:18px;background:linear-gradient(#fafbfc,#e6e9ee);border-left:1px solid #c8ccd2"></div>
<svg style="left:644px;top:222px" width="14" height="14" viewBox="0 0 14 14"><g transform="scale(0.45)"><defs><radialGradient id="lgs" cx="0.45" cy="0.4" r="0.6"><stop offset="0" stop-color="#ffffff"/><stop offset="0.5" stop-color="#d3ecfb"/><stop offset="1" stop-color="#8cc4ea"/></radialGradient></defs><path d="M3 27.5L12.5 18" stroke="#5a5a5a" stroke-width="5.2" stroke-linecap="round"/><path d="M4.2 26.3L12 18.5" stroke="#f0902a" stroke-width="3.6" stroke-linecap="round"/><path d="M11 19.5L14 16.5" stroke="#777" stroke-width="3.5"/><circle cx="20" cy="10" r="8.6" fill="url(#lgs)" stroke="#6d7f9c" stroke-width="1.8"/><path d="M15 8.5A5.5 5.5 0 0 1 19 4.6" stroke="#fff" stroke-width="1.5" fill="none"/></g></svg>
<div class="b" style="left:684px;top:179px;width:120px;height:25px;background:linear-gradient(#fbfbfc,#eceef1 50%,#e2e5e9);border:1px solid #b4b9c0;border-radius:3px"></div>
<svg style="left:687px;top:183px" width="18" height="18" viewBox="0 0 18 18"><g transform="scale(0.52)"><defs><radialGradient id="lgc" cx="0.45" cy="0.4" r="0.6"><stop offset="0" stop-color="#ffffff"/><stop offset="0.5" stop-color="#d3ecfb"/><stop offset="1" stop-color="#8cc4ea"/></radialGradient></defs><path d="M3 27.5L12.5 18" stroke="#5a5a5a" stroke-width="5.2" stroke-linecap="round"/><path d="M4.2 26.3L12 18.5" stroke="#f0902a" stroke-width="3.6" stroke-linecap="round"/><path d="M11 19.5L14 16.5" stroke="#777" stroke-width="3.5"/><circle cx="20" cy="10" r="8.6" fill="url(#lgc)" stroke="#6d7f9c" stroke-width="1.8"/><path d="M15 8.5A5.5 5.5 0 0 1 19 4.6" stroke="#fff" stroke-width="1.5" fill="none"/></g></svg>
<div class="t" style="left:602px;width:300px;text-align:center;top:186.68px;font-size:11px;color:#2c2e3a;font-weight:normal;letter-spacing:-0.25px;">Buscar</div>
<div class="b" style="left:684px;top:211px;width:120px;height:26px;background:linear-gradient(#fbfbfc,#eceef1 50%,#e2e5e9);border:1px solid #b4b9c0;border-radius:3px"></div>
<div class="t" style="left:594px;width:300px;text-align:center;top:218.68px;font-size:11px;color:#2c2e3a;font-weight:normal;letter-spacing:-0.25px;">Mostrar todos</div>
<div class="b" style="left:684px;top:247px;width:13px;height:13px;background:linear-gradient(#f6f6f6,#e4e4e4);border:1px solid #a0a4aa"></div>
<svg style="left:686px;top:249px" width="9" height="9" viewBox="0 0 9 9"><path d="M1 4.5L3.5 7.5L8 0.8" stroke="#333" stroke-width="1.7" fill="none"/></svg>
<div class="t " style="left:701px;top:248.68px;font-size:11px;color:#2c2e3a;font-weight:normal;letter-spacing:-0.1px;">Solicitar filtro al entrar</div>
<div class="b" style="left:252px;top:269px;width:1px;height:504px;background:#a9b0b8"></div>
<div class="b" style="left:253px;top:269px;width:977px;height:1px;background:#a9b0b8"></div>
<div class="b" style="left:253px;top:270px;width:975px;height:19px;background:linear-gradient(#f8f9fb,#eceef2)"></div>
<div class="b" style="left:253px;top:289px;width:976px;height:1px;background:#a9b0b8"></div>
<div class="b" style="left:268px;top:270px;width:1px;height:19px;background:#aab1b9"></div>
<div class="b" style="left:343px;top:270px;width:1px;height:19px;background:#aab1b9"></div>
<div class="b" style="left:636px;top:270px;width:1px;height:19px;background:#aab1b9"></div>
<div class="b" style="left:772px;top:270px;width:1px;height:19px;background:#aab1b9"></div>
<div class="b" style="left:885px;top:270px;width:1px;height:19px;background:#aab1b9"></div>
<div class="b" style="left:1228px;top:270px;width:1px;height:19px;background:#aab1b9"></div>
<div class="b" style="left:1228px;top:269px;width:1px;height:504px;background:#aab1b9"></div>
<div class="b" style="left:1229px;top:270px;width:1px;height:503px;background:#f3f4f6"></div>
<div class="b" style="left:300px;top:273px;width:13px;height:13px;background:#f4f4f4;border:1px solid #a8acb2"></div>
<div class="b" style="left:302px;top:275px;width:9px;height:9px;background:linear-gradient(#ffe27a,#f7b400);border:1px solid #e07800"></div>
<div class="t " style="left:347px;top:273.68px;font-size:11px;color:#33354a;font-weight:normal;letter-spacing:-0.1px;">Departamento</div>
<div class="t " style="left:640px;top:273.68px;font-size:11px;color:#33354a;font-weight:normal;letter-spacing:-0.1px;">Tipo departamento</div>
<div class="t " style="left:776px;top:273.68px;font-size:11px;color:#33354a;font-weight:normal;letter-spacing:-0.1px;">Inicio contrato</div>
<div class="t " style="left:889px;top:273.68px;font-size:11px;color:#33354a;font-weight:normal;letter-spacing:-0.1px;">Nombre</div>
<div class="b" style="left:253px;top:290px;width:15px;height:20px;background:#f6f7f9"></div>
<div class="b" style="left:253px;top:310px;width:15px;height:1px;background:#a9b0b8"></div>
<div class="b" style="left:268px;top:290px;width:1px;height:21px;background:#aab1b9"></div>
<div class="b" style="left:269px;top:290px;width:959px;height:20px;background:#e1eaf5"></div>
<div class="b" style="left:269px;top:310px;width:959px;height:1px;background:#d3d7dd"></div>
<div class="b" style="left:343px;top:290px;width:1px;height:20px;background:#d5d9df"></div>
<div class="b" style="left:636px;top:290px;width:1px;height:20px;background:#d5d9df"></div>
<div class="b" style="left:772px;top:290px;width:1px;height:20px;background:#d5d9df"></div>
<div class="b" style="left:885px;top:290px;width:1px;height:20px;background:#d5d9df"></div>
<div class="b" style="left:300px;top:293px;width:13px;height:13px;background:linear-gradient(135deg,#dcdcdc,#f4f4f4);border:1px solid #a4a8ae;box-shadow:inset 0 0 0 1px #f8f8f8"></div>
<svg style="left:302px;top:295px" width="9" height="9" viewBox="0 0 9 9"><path d="M1.3 4.3L3.7 7.6L8.2 0.6" stroke="#404040" stroke-width="2.1" fill="none"/></svg>
<div class="t " style="left:347px;top:294.68px;font-size:11px;color:#1c1c24;font-weight:normal;letter-spacing:-0.1px;">Bailén, 20, LOCAL 1</div>
<div class="t " style="left:640px;top:294.68px;font-size:11px;color:#1c1c24;font-weight:normal;letter-spacing:-0.2px;">Local comercial</div>
<div class="t " style="left:889px;top:294.68px;font-size:11px;color:#1c1c24;font-weight:normal;letter-spacing:-0.25px;">Emilia Cavero Villena</div>
<div class="b" style="left:253px;top:311px;width:15px;height:20px;background:#f6f7f9"></div>
<div class="b" style="left:253px;top:331px;width:15px;height:1px;background:#a9b0b8"></div>
<div class="b" style="left:268px;top:311px;width:1px;height:21px;background:#aab1b9"></div>
<div class="b" style="left:269px;top:311px;width:959px;height:20px;background:#e1eaf5"></div>
<div class="b" style="left:269px;top:331px;width:959px;height:1px;background:#d3d7dd"></div>
<div class="b" style="left:343px;top:311px;width:1px;height:20px;background:#d5d9df"></div>
<div class="b" style="left:636px;top:311px;width:1px;height:20px;background:#d5d9df"></div>
<div class="b" style="left:772px;top:311px;width:1px;height:20px;background:#d5d9df"></div>
<div class="b" style="left:885px;top:311px;width:1px;height:20px;background:#d5d9df"></div>
<div class="b" style="left:300px;top:314px;width:13px;height:13px;background:linear-gradient(135deg,#dcdcdc,#f4f4f4);border:1px solid #a4a8ae;box-shadow:inset 0 0 0 1px #f8f8f8"></div>
<svg style="left:302px;top:316px" width="9" height="9" viewBox="0 0 9 9"><path d="M1.3 4.3L3.7 7.6L8.2 0.6" stroke="#404040" stroke-width="2.1" fill="none"/></svg>
<div class="t " style="left:347px;top:315.68px;font-size:11px;color:#1c1c24;font-weight:normal;letter-spacing:-0.1px;">Bailén, 20, LOCAL 2</div>
<div class="t " style="left:640px;top:315.68px;font-size:11px;color:#1c1c24;font-weight:normal;letter-spacing:-0.2px;">Local comercial</div>
<div class="t " style="left:889px;top:315.68px;font-size:11px;color:#1c1c24;font-weight:normal;letter-spacing:-0.25px;">Alejandro Picon Arcos</div>
<div class="b" style="left:253px;top:332px;width:15px;height:20px;background:#f6f7f9"></div>
<div class="b" style="left:253px;top:352px;width:15px;height:1px;background:#a9b0b8"></div>
<div class="b" style="left:268px;top:332px;width:1px;height:21px;background:#aab1b9"></div>
<div class="b" style="left:269px;top:332px;width:959px;height:20px;background:#e1eaf5"></div>
<div class="b" style="left:269px;top:352px;width:959px;height:1px;background:#d3d7dd"></div>
<div class="b" style="left:343px;top:332px;width:1px;height:20px;background:#d5d9df"></div>
<div class="b" style="left:636px;top:332px;width:1px;height:20px;background:#d5d9df"></div>
<div class="b" style="left:772px;top:332px;width:1px;height:20px;background:#d5d9df"></div>
<div class="b" style="left:885px;top:332px;width:1px;height:20px;background:#d5d9df"></div>
<div class="b" style="left:300px;top:335px;width:13px;height:13px;background:linear-gradient(135deg,#dcdcdc,#f4f4f4);border:1px solid #a4a8ae;box-shadow:inset 0 0 0 1px #f8f8f8"></div>
<svg style="left:302px;top:337px" width="9" height="9" viewBox="0 0 9 9"><path d="M1.3 4.3L3.7 7.6L8.2 0.6" stroke="#404040" stroke-width="2.1" fill="none"/></svg>
<div class="t " style="left:347px;top:336.68px;font-size:11px;color:#1c1c24;font-weight:normal;letter-spacing:-0.1px;">Bailén, 20, LOCAL 3</div>
<div class="t " style="left:640px;top:336.68px;font-size:11px;color:#1c1c24;font-weight:normal;letter-spacing:-0.2px;">Local comercial</div>
<div class="t " style="left:889px;top:336.68px;font-size:11px;color:#1c1c24;font-weight:normal;letter-spacing:-0.25px;">Olga Olle Gamero</div>
<div class="b" style="left:253px;top:353px;width:15px;height:20px;background:#f6f7f9"></div>
<div class="b" style="left:253px;top:373px;width:15px;height:1px;background:#a9b0b8"></div>
<div class="b" style="left:268px;top:353px;width:1px;height:21px;background:#aab1b9"></div>
<div class="b" style="left:269px;top:353px;width:959px;height:20px;background:#e1eaf5"></div>
<div class="b" style="left:269px;top:373px;width:959px;height:1px;background:#d3d7dd"></div>
<div class="b" style="left:343px;top:353px;width:1px;height:20px;background:#d5d9df"></div>
<div class="b" style="left:636px;top:353px;width:1px;height:20px;background:#d5d9df"></div>
<div class="b" style="left:772px;top:353px;width:1px;height:20px;background:#d5d9df"></div>
<div class="b" style="left:885px;top:353px;width:1px;height:20px;background:#d5d9df"></div>
<div class="b" style="left:300px;top:356px;width:13px;height:13px;background:linear-gradient(135deg,#dcdcdc,#f4f4f4);border:1px solid #a4a8ae;box-shadow:inset 0 0 0 1px #f8f8f8"></div>
<svg style="left:302px;top:358px" width="9" height="9" viewBox="0 0 9 9"><path d="M1.3 4.3L3.7 7.6L8.2 0.6" stroke="#404040" stroke-width="2.1" fill="none"/></svg>
<div class="t " style="left:347px;top:357.68px;font-size:11px;color:#1c1c24;font-weight:normal;letter-spacing:-0.1px;">Bailén, 20, PRAL.</div>
<div class="t " style="left:640px;top:357.68px;font-size:11px;color:#1c1c24;font-weight:normal;letter-spacing:-0.2px;">Piso</div>
<div class="t " style="left:889px;top:357.68px;font-size:11px;color:#1c1c24;font-weight:normal;letter-spacing:-0.25px;">Rafael Ferrando Pitarch</div>
<div class="b" style="left:253px;top:374px;width:15px;height:20px;background:#f6f7f9"></div>
<div class="b" style="left:253px;top:394px;width:15px;height:1px;background:#a9b0b8"></div>
<div class="b" style="left:268px;top:374px;width:1px;height:21px;background:#aab1b9"></div>
<div class="b" style="left:269px;top:374px;width:959px;height:20px;background:#e1eaf5"></div>
<div class="b" style="left:269px;top:394px;width:959px;height:1px;background:#d3d7dd"></div>
<div class="b" style="left:343px;top:374px;width:1px;height:20px;background:#d5d9df"></div>
<div class="b" style="left:636px;top:374px;width:1px;height:20px;background:#d5d9df"></div>
<div class="b" style="left:772px;top:374px;width:1px;height:20px;background:#d5d9df"></div>
<div class="b" style="left:885px;top:374px;width:1px;height:20px;background:#d5d9df"></div>
<div class="b" style="left:300px;top:377px;width:13px;height:13px;background:linear-gradient(135deg,#dcdcdc,#f4f4f4);border:1px solid #a4a8ae;box-shadow:inset 0 0 0 1px #f8f8f8"></div>
<svg style="left:302px;top:379px" width="9" height="9" viewBox="0 0 9 9"><path d="M1.3 4.3L3.7 7.6L8.2 0.6" stroke="#404040" stroke-width="2.1" fill="none"/></svg>
<div class="t " style="left:347px;top:378.68px;font-size:11px;color:#1c1c24;font-weight:normal;letter-spacing:-0.1px;">Bailén, 20, 1º 1ª</div>
<div class="t " style="left:640px;top:378.68px;font-size:11px;color:#1c1c24;font-weight:normal;letter-spacing:-0.2px;">Piso</div>
<div class="t " style="left:889px;top:378.68px;font-size:11px;color:#1c1c24;font-weight:normal;letter-spacing:-0.25px;">Nicolás Olivares Perelló</div>
<div class="b" style="left:253px;top:395px;width:15px;height:20px;background:#f6f7f9"></div>
<div class="b" style="left:253px;top:415px;width:15px;height:1px;background:#a9b0b8"></div>
<div class="b" style="left:268px;top:395px;width:1px;height:21px;background:#aab1b9"></div>
<div class="b" style="left:269px;top:395px;width:959px;height:20px;background:#e1eaf5"></div>
<div class="b" style="left:269px;top:415px;width:959px;height:1px;background:#d3d7dd"></div>
<div class="b" style="left:343px;top:395px;width:1px;height:20px;background:#d5d9df"></div>
<div class="b" style="left:636px;top:395px;width:1px;height:20px;background:#d5d9df"></div>
<div class="b" style="left:772px;top:395px;width:1px;height:20px;background:#d5d9df"></div>
<div class="b" style="left:885px;top:395px;width:1px;height:20px;background:#d5d9df"></div>
<div class="b" style="left:300px;top:398px;width:13px;height:13px;background:linear-gradient(135deg,#dcdcdc,#f4f4f4);border:1px solid #a4a8ae;box-shadow:inset 0 0 0 1px #f8f8f8"></div>
<svg style="left:302px;top:400px" width="9" height="9" viewBox="0 0 9 9"><path d="M1.3 4.3L3.7 7.6L8.2 0.6" stroke="#404040" stroke-width="2.1" fill="none"/></svg>
<div class="t " style="left:347px;top:399.68px;font-size:11px;color:#1c1c24;font-weight:normal;letter-spacing:-0.1px;">Bailén, 20, 1º 2ª</div>
<div class="t " style="left:640px;top:399.68px;font-size:11px;color:#1c1c24;font-weight:normal;letter-spacing:-0.2px;">Piso</div>
<div class="t " style="left:889px;top:399.68px;font-size:11px;color:#1c1c24;font-weight:normal;letter-spacing:-0.25px;">Gloria Barreiro Rosa</div>
<div class="b" style="left:253px;top:416px;width:15px;height:20px;background:#f6f7f9"></div>
<div class="b" style="left:253px;top:436px;width:15px;height:1px;background:#a9b0b8"></div>
<div class="b" style="left:268px;top:416px;width:1px;height:21px;background:#aab1b9"></div>
<div class="b" style="left:269px;top:416px;width:959px;height:20px;background:#e1eaf5"></div>
<div class="b" style="left:269px;top:436px;width:959px;height:1px;background:#d3d7dd"></div>
<div class="b" style="left:343px;top:416px;width:1px;height:20px;background:#d5d9df"></div>
<div class="b" style="left:636px;top:416px;width:1px;height:20px;background:#d5d9df"></div>
<div class="b" style="left:772px;top:416px;width:1px;height:20px;background:#d5d9df"></div>
<div class="b" style="left:885px;top:416px;width:1px;height:20px;background:#d5d9df"></div>
<div class="b" style="left:300px;top:419px;width:13px;height:13px;background:linear-gradient(135deg,#dcdcdc,#f4f4f4);border:1px solid #a4a8ae;box-shadow:inset 0 0 0 1px #f8f8f8"></div>
<svg style="left:302px;top:421px" width="9" height="9" viewBox="0 0 9 9"><path d="M1.3 4.3L3.7 7.6L8.2 0.6" stroke="#404040" stroke-width="2.1" fill="none"/></svg>
<div class="t " style="left:347px;top:420.68px;font-size:11px;color:#1c1c24;font-weight:normal;letter-spacing:-0.1px;">Bailén, 20, 2ª 1ª</div>
<div class="t " style="left:640px;top:420.68px;font-size:11px;color:#1c1c24;font-weight:normal;letter-spacing:-0.2px;">Piso</div>
<div class="t " style="left:889px;top:420.68px;font-size:11px;color:#1c1c24;font-weight:normal;letter-spacing:-0.25px;">Jorge Aguirre Camarero</div>
<div class="b" style="left:253px;top:437px;width:15px;height:20px;background:#f6f7f9"></div>
<div class="b" style="left:253px;top:457px;width:15px;height:1px;background:#a9b0b8"></div>
<div class="b" style="left:268px;top:437px;width:1px;height:21px;background:#aab1b9"></div>
<div class="b" style="left:269px;top:437px;width:959px;height:20px;background:#e1eaf5"></div>
<div class="b" style="left:269px;top:457px;width:959px;height:1px;background:#d3d7dd"></div>
<div class="b" style="left:343px;top:437px;width:1px;height:20px;background:#d5d9df"></div>
<div class="b" style="left:636px;top:437px;width:1px;height:20px;background:#d5d9df"></div>
<div class="b" style="left:772px;top:437px;width:1px;height:20px;background:#d5d9df"></div>
<div class="b" style="left:885px;top:437px;width:1px;height:20px;background:#d5d9df"></div>
<div class="b" style="left:300px;top:440px;width:13px;height:13px;background:linear-gradient(135deg,#dcdcdc,#f4f4f4);border:1px solid #a4a8ae;box-shadow:inset 0 0 0 1px #f8f8f8"></div>
<svg style="left:302px;top:442px" width="9" height="9" viewBox="0 0 9 9"><path d="M1.3 4.3L3.7 7.6L8.2 0.6" stroke="#404040" stroke-width="2.1" fill="none"/></svg>
<div class="t " style="left:347px;top:441.68px;font-size:11px;color:#1c1c24;font-weight:normal;letter-spacing:-0.1px;">Bailén, 20, 2º 2ª</div>
<div class="t " style="left:640px;top:441.68px;font-size:11px;color:#1c1c24;font-weight:normal;letter-spacing:-0.2px;">Piso</div>
<div class="t " style="left:889px;top:441.68px;font-size:11px;color:#1c1c24;font-weight:normal;letter-spacing:-0.25px;">Carlos Saenz Aguayo</div>
<div class="b" style="left:253px;top:458px;width:15px;height:20px;background:#f6f7f9"></div>
<div class="b" style="left:253px;top:478px;width:15px;height:1px;background:#a9b0b8"></div>
<div class="b" style="left:268px;top:458px;width:1px;height:21px;background:#aab1b9"></div>
<div class="b" style="left:269px;top:458px;width:959px;height:20px;background:#e1eaf5"></div>
<div class="b" style="left:269px;top:478px;width:959px;height:1px;background:#d3d7dd"></div>
<div class="b" style="left:343px;top:458px;width:1px;height:20px;background:#d5d9df"></div>
<div class="b" style="left:636px;top:458px;width:1px;height:20px;background:#d5d9df"></div>
<div class="b" style="left:772px;top:458px;width:1px;height:20px;background:#d5d9df"></div>
<div class="b" style="left:885px;top:458px;width:1px;height:20px;background:#d5d9df"></div>
<div class="b" style="left:300px;top:461px;width:13px;height:13px;background:linear-gradient(135deg,#dcdcdc,#f4f4f4);border:1px solid #a4a8ae;box-shadow:inset 0 0 0 1px #f8f8f8"></div>
<svg style="left:302px;top:463px" width="9" height="9" viewBox="0 0 9 9"><path d="M1.3 4.3L3.7 7.6L8.2 0.6" stroke="#404040" stroke-width="2.1" fill="none"/></svg>
<div class="t " style="left:347px;top:462.68px;font-size:11px;color:#1c1c24;font-weight:normal;letter-spacing:-0.1px;">Bailén, 20, 3º 1ª</div>
<div class="t " style="left:640px;top:462.68px;font-size:11px;color:#1c1c24;font-weight:normal;letter-spacing:-0.2px;">Piso</div>
<div class="t " style="left:889px;top:462.68px;font-size:11px;color:#1c1c24;font-weight:normal;letter-spacing:-0.25px;">Silvia Novo Augusto</div>
<div class="b" style="left:253px;top:479px;width:15px;height:20px;background:#f6f7f9"></div>
<div class="b" style="left:253px;top:499px;width:15px;height:1px;background:#a9b0b8"></div>
<div class="b" style="left:268px;top:479px;width:1px;height:21px;background:#aab1b9"></div>
<div class="b" style="left:269px;top:479px;width:959px;height:20px;background:#e1eaf5"></div>
<div class="b" style="left:269px;top:499px;width:959px;height:1px;background:#d3d7dd"></div>
<div class="b" style="left:343px;top:479px;width:1px;height:20px;background:#d5d9df"></div>
<div class="b" style="left:636px;top:479px;width:1px;height:20px;background:#d5d9df"></div>
<div class="b" style="left:772px;top:479px;width:1px;height:20px;background:#d5d9df"></div>
<div class="b" style="left:885px;top:479px;width:1px;height:20px;background:#d5d9df"></div>
<div class="b" style="left:300px;top:482px;width:13px;height:13px;background:linear-gradient(135deg,#dcdcdc,#f4f4f4);border:1px solid #a4a8ae;box-shadow:inset 0 0 0 1px #f8f8f8"></div>
<svg style="left:302px;top:484px" width="9" height="9" viewBox="0 0 9 9"><path d="M1.3 4.3L3.7 7.6L8.2 0.6" stroke="#404040" stroke-width="2.1" fill="none"/></svg>
<div class="t " style="left:347px;top:483.68px;font-size:11px;color:#1c1c24;font-weight:normal;letter-spacing:-0.1px;">Bailén, 20, 3º 2ª</div>
<div class="t " style="left:640px;top:483.68px;font-size:11px;color:#1c1c24;font-weight:normal;letter-spacing:-0.2px;">Piso</div>
<div class="t " style="left:889px;top:483.68px;font-size:11px;color:#1c1c24;font-weight:normal;letter-spacing:-0.25px;">Alejandro Atienza Domenech</div>
<div class="b" style="left:253px;top:500px;width:15px;height:20px;background:#f6f7f9"></div>
<div class="b" style="left:253px;top:520px;width:15px;height:1px;background:#a9b0b8"></div>
<div class="b" style="left:268px;top:500px;width:1px;height:21px;background:#aab1b9"></div>
<div class="b" style="left:269px;top:500px;width:959px;height:20px;background:#e1eaf5"></div>
<div class="b" style="left:269px;top:520px;width:959px;height:1px;background:#d3d7dd"></div>
<div class="b" style="left:343px;top:500px;width:1px;height:20px;background:#d5d9df"></div>
<div class="b" style="left:636px;top:500px;width:1px;height:20px;background:#d5d9df"></div>
<div class="b" style="left:772px;top:500px;width:1px;height:20px;background:#d5d9df"></div>
<div class="b" style="left:885px;top:500px;width:1px;height:20px;background:#d5d9df"></div>
<div class="b" style="left:300px;top:503px;width:13px;height:13px;background:linear-gradient(135deg,#dcdcdc,#f4f4f4);border:1px solid #a4a8ae;box-shadow:inset 0 0 0 1px #f8f8f8"></div>
<svg style="left:302px;top:505px" width="9" height="9" viewBox="0 0 9 9"><path d="M1.3 4.3L3.7 7.6L8.2 0.6" stroke="#404040" stroke-width="2.1" fill="none"/></svg>
<div class="t " style="left:347px;top:504.68px;font-size:11px;color:#1c1c24;font-weight:normal;letter-spacing:-0.1px;">Bailén, 20, ATICO</div>
<div class="t " style="left:640px;top:504.68px;font-size:11px;color:#1c1c24;font-weight:normal;letter-spacing:-0.2px;">Piso</div>
<div class="t " style="left:889px;top:504.68px;font-size:11px;color:#1c1c24;font-weight:normal;letter-spacing:-0.25px;">José Miguel Mulero Egea</div>
<div class="b" style="left:253px;top:521px;width:15px;height:20px;background:#f6f7f9"></div>
<div class="b" style="left:253px;top:541px;width:15px;height:1px;background:#a9b0b8"></div>
<div class="b" style="left:268px;top:521px;width:1px;height:21px;background:#aab1b9"></div>
<div class="b" style="left:269px;top:521px;width:959px;height:20px;background:#e1eaf5"></div>
<div class="b" style="left:269px;top:541px;width:959px;height:1px;background:#d3d7dd"></div>
<div class="b" style="left:343px;top:521px;width:1px;height:20px;background:#d5d9df"></div>
<div class="b" style="left:636px;top:521px;width:1px;height:20px;background:#d5d9df"></div>
<div class="b" style="left:772px;top:521px;width:1px;height:20px;background:#d5d9df"></div>
<div class="b" style="left:885px;top:521px;width:1px;height:20px;background:#d5d9df"></div>
<div class="b" style="left:300px;top:524px;width:13px;height:13px;background:linear-gradient(135deg,#dcdcdc,#f4f4f4);border:1px solid #a4a8ae;box-shadow:inset 0 0 0 1px #f8f8f8"></div>
<svg style="left:302px;top:526px" width="9" height="9" viewBox="0 0 9 9"><path d="M1.3 4.3L3.7 7.6L8.2 0.6" stroke="#404040" stroke-width="2.1" fill="none"/></svg>
<div class="t " style="left:347px;top:525.68px;font-size:11px;color:#1c1c24;font-weight:normal;letter-spacing:-0.1px;">Valencia, 220, LOCAL</div>
<div class="t " style="left:640px;top:525.68px;font-size:11px;color:#1c1c24;font-weight:normal;letter-spacing:-0.2px;">Local comercial</div>
<div class="t " style="left:889px;top:525.68px;font-size:11px;color:#1c1c24;font-weight:normal;letter-spacing:-0.25px;">Miriam Victoria Rodero</div>
<div class="b" style="left:253px;top:542px;width:15px;height:20px;background:#f6f7f9"></div>
<div class="b" style="left:253px;top:562px;width:15px;height:1px;background:#a9b0b8"></div>
<div class="b" style="left:268px;top:542px;width:1px;height:21px;background:#aab1b9"></div>
<div class="b" style="left:269px;top:542px;width:959px;height:20px;background:#e1eaf5"></div>
<div class="b" style="left:269px;top:562px;width:959px;height:1px;background:#d3d7dd"></div>
<div class="b" style="left:343px;top:542px;width:1px;height:20px;background:#d5d9df"></div>
<div class="b" style="left:636px;top:542px;width:1px;height:20px;background:#d5d9df"></div>
<div class="b" style="left:772px;top:542px;width:1px;height:20px;background:#d5d9df"></div>
<div class="b" style="left:885px;top:542px;width:1px;height:20px;background:#d5d9df"></div>
<div class="b" style="left:300px;top:545px;width:13px;height:13px;background:linear-gradient(135deg,#dcdcdc,#f4f4f4);border:1px solid #a4a8ae;box-shadow:inset 0 0 0 1px #f8f8f8"></div>
<svg style="left:302px;top:547px" width="9" height="9" viewBox="0 0 9 9"><path d="M1.3 4.3L3.7 7.6L8.2 0.6" stroke="#404040" stroke-width="2.1" fill="none"/></svg>
<div class="t " style="left:347px;top:546.68px;font-size:11px;color:#1c1c24;font-weight:normal;letter-spacing:-0.1px;">Valencia, 220, 1º 1ª</div>
<div class="t " style="left:640px;top:546.68px;font-size:11px;color:#1c1c24;font-weight:normal;letter-spacing:-0.2px;">Piso</div>
<div class="t " style="left:889px;top:546.68px;font-size:11px;color:#1c1c24;font-weight:normal;letter-spacing:-0.25px;">José López García</div>
<div class="b" style="left:253px;top:563px;width:15px;height:20px;background:#f6f7f9"></div>
<div class="b" style="left:253px;top:583px;width:15px;height:1px;background:#a9b0b8"></div>
<div class="b" style="left:268px;top:563px;width:1px;height:21px;background:#aab1b9"></div>
<div class="b" style="left:269px;top:563px;width:959px;height:20px;background:#e1eaf5"></div>
<div class="b" style="left:269px;top:583px;width:959px;height:1px;background:#d3d7dd"></div>
<div class="b" style="left:343px;top:563px;width:1px;height:20px;background:#d5d9df"></div>
<div class="b" style="left:636px;top:563px;width:1px;height:20px;background:#d5d9df"></div>
<div class="b" style="left:772px;top:563px;width:1px;height:20px;background:#d5d9df"></div>
<div class="b" style="left:885px;top:563px;width:1px;height:20px;background:#d5d9df"></div>
<div class="b" style="left:300px;top:566px;width:13px;height:13px;background:linear-gradient(135deg,#dcdcdc,#f4f4f4);border:1px solid #a4a8ae;box-shadow:inset 0 0 0 1px #f8f8f8"></div>
<svg style="left:302px;top:568px" width="9" height="9" viewBox="0 0 9 9"><path d="M1.3 4.3L3.7 7.6L8.2 0.6" stroke="#404040" stroke-width="2.1" fill="none"/></svg>
<div class="t " style="left:347px;top:567.68px;font-size:11px;color:#1c1c24;font-weight:normal;letter-spacing:-0.1px;">Valencia, 220, 1º 2ª</div>
<div class="t " style="left:640px;top:567.68px;font-size:11px;color:#1c1c24;font-weight:normal;letter-spacing:-0.2px;">Piso</div>
<div class="t " style="left:889px;top:567.68px;font-size:11px;color:#1c1c24;font-weight:normal;letter-spacing:-0.25px;">Maria Leal Zurita</div>
<div class="b" style="left:253px;top:584px;width:15px;height:20px;background:#f6f7f9"></div>
<div class="b" style="left:253px;top:604px;width:15px;height:1px;background:#a9b0b8"></div>
<div class="b" style="left:268px;top:584px;width:1px;height:21px;background:#aab1b9"></div>
<div class="b" style="left:269px;top:584px;width:959px;height:20px;background:#e1eaf5"></div>
<div class="b" style="left:269px;top:604px;width:959px;height:1px;background:#d3d7dd"></div>
<div class="b" style="left:343px;top:584px;width:1px;height:20px;background:#d5d9df"></div>
<div class="b" style="left:636px;top:584px;width:1px;height:20px;background:#d5d9df"></div>
<div class="b" style="left:772px;top:584px;width:1px;height:20px;background:#d5d9df"></div>
<div class="b" style="left:885px;top:584px;width:1px;height:20px;background:#d5d9df"></div>
<div class="b" style="left:300px;top:587px;width:13px;height:13px;background:linear-gradient(135deg,#dcdcdc,#f4f4f4);border:1px solid #a4a8ae;box-shadow:inset 0 0 0 1px #f8f8f8"></div>
<svg style="left:302px;top:589px" width="9" height="9" viewBox="0 0 9 9"><path d="M1.3 4.3L3.7 7.6L8.2 0.6" stroke="#404040" stroke-width="2.1" fill="none"/></svg>
<div class="t " style="left:347px;top:588.68px;font-size:11px;color:#1c1c24;font-weight:normal;letter-spacing:-0.1px;">Valencia, 220, 2º 1ª</div>
<div class="t " style="left:640px;top:588.68px;font-size:11px;color:#1c1c24;font-weight:normal;letter-spacing:-0.2px;">Piso</div>
<div class="t " style="left:889px;top:588.68px;font-size:11px;color:#1c1c24;font-weight:normal;letter-spacing:-0.25px;">Ismael Olea Guardia</div>
<div class="b" style="left:253px;top:605px;width:15px;height:20px;background:#f6f7f9"></div>
<div class="b" style="left:253px;top:625px;width:15px;height:1px;background:#a9b0b8"></div>
<div class="b" style="left:268px;top:605px;width:1px;height:21px;background:#aab1b9"></div>
<div class="b" style="left:269px;top:605px;width:959px;height:20px;background:#e1eaf5"></div>
<div class="b" style="left:269px;top:625px;width:959px;height:1px;background:#d3d7dd"></div>
<div class="b" style="left:343px;top:605px;width:1px;height:20px;background:#d5d9df"></div>
<div class="b" style="left:636px;top:605px;width:1px;height:20px;background:#d5d9df"></div>
<div class="b" style="left:772px;top:605px;width:1px;height:20px;background:#d5d9df"></div>
<div class="b" style="left:885px;top:605px;width:1px;height:20px;background:#d5d9df"></div>
<div class="b" style="left:300px;top:608px;width:13px;height:13px;background:linear-gradient(135deg,#dcdcdc,#f4f4f4);border:1px solid #a4a8ae;box-shadow:inset 0 0 0 1px #f8f8f8"></div>
<svg style="left:302px;top:610px" width="9" height="9" viewBox="0 0 9 9"><path d="M1.3 4.3L3.7 7.6L8.2 0.6" stroke="#404040" stroke-width="2.1" fill="none"/></svg>
<div class="t " style="left:347px;top:609.68px;font-size:11px;color:#1c1c24;font-weight:normal;letter-spacing:-0.1px;">Valencia, 220, 2º 2ª</div>
<div class="t " style="left:640px;top:609.68px;font-size:11px;color:#1c1c24;font-weight:normal;letter-spacing:-0.2px;">Piso</div>
<div class="t " style="left:889px;top:609.68px;font-size:11px;color:#1c1c24;font-weight:normal;letter-spacing:-0.25px;">Salvador Echeverría Otero</div>
<div class="b" style="left:253px;top:626px;width:15px;height:20px;background:#f6f7f9"></div>
<div class="b" style="left:253px;top:646px;width:15px;height:1px;background:#a9b0b8"></div>
<div class="b" style="left:268px;top:626px;width:1px;height:21px;background:#aab1b9"></div>
<div class="b" style="left:269px;top:626px;width:959px;height:20px;background:#e1eaf5"></div>
<div class="b" style="left:269px;top:646px;width:959px;height:1px;background:#d3d7dd"></div>
<div class="b" style="left:343px;top:626px;width:1px;height:20px;background:#d5d9df"></div>
<div class="b" style="left:636px;top:626px;width:1px;height:20px;background:#d5d9df"></div>
<div class="b" style="left:772px;top:626px;width:1px;height:20px;background:#d5d9df"></div>
<div class="b" style="left:885px;top:626px;width:1px;height:20px;background:#d5d9df"></div>
<div class="b" style="left:300px;top:629px;width:13px;height:13px;background:linear-gradient(135deg,#dcdcdc,#f4f4f4);border:1px solid #a4a8ae;box-shadow:inset 0 0 0 1px #f8f8f8"></div>
<svg style="left:302px;top:631px" width="9" height="9" viewBox="0 0 9 9"><path d="M1.3 4.3L3.7 7.6L8.2 0.6" stroke="#404040" stroke-width="2.1" fill="none"/></svg>
<div class="t " style="left:347px;top:630.68px;font-size:11px;color:#1c1c24;font-weight:normal;letter-spacing:-0.1px;">Valencia, 220, 3º 1ª</div>
<div class="t " style="left:640px;top:630.68px;font-size:11px;color:#1c1c24;font-weight:normal;letter-spacing:-0.2px;">Piso</div>
<div class="t " style="left:889px;top:630.68px;font-size:11px;color:#1c1c24;font-weight:normal;letter-spacing:-0.25px;">Esther Gallegos Peña</div>
<div class="b" style="left:253px;top:647px;width:15px;height:20px;background:#f6f7f9"></div>
<div class="b" style="left:253px;top:667px;width:15px;height:1px;background:#a9b0b8"></div>
<div class="b" style="left:268px;top:647px;width:1px;height:21px;background:#aab1b9"></div>
<div class="b" style="left:269px;top:647px;width:959px;height:20px;background:#e1eaf5"></div>
<div class="b" style="left:269px;top:667px;width:959px;height:1px;background:#d3d7dd"></div>
<div class="b" style="left:343px;top:647px;width:1px;height:20px;background:#d5d9df"></div>
<div class="b" style="left:636px;top:647px;width:1px;height:20px;background:#d5d9df"></div>
<div class="b" style="left:772px;top:647px;width:1px;height:20px;background:#d5d9df"></div>
<div class="b" style="left:885px;top:647px;width:1px;height:20px;background:#d5d9df"></div>
<div class="b" style="left:300px;top:650px;width:13px;height:13px;background:linear-gradient(135deg,#dcdcdc,#f4f4f4);border:1px solid #a4a8ae;box-shadow:inset 0 0 0 1px #f8f8f8"></div>
<svg style="left:302px;top:652px" width="9" height="9" viewBox="0 0 9 9"><path d="M1.3 4.3L3.7 7.6L8.2 0.6" stroke="#404040" stroke-width="2.1" fill="none"/></svg>
<div class="t " style="left:347px;top:651.68px;font-size:11px;color:#1c1c24;font-weight:normal;letter-spacing:-0.1px;">Valencia, 220, 3ª 2ª</div>
<div class="t " style="left:640px;top:651.68px;font-size:11px;color:#1c1c24;font-weight:normal;letter-spacing:-0.2px;">Piso</div>
<div class="t " style="left:889px;top:651.68px;font-size:11px;color:#1c1c24;font-weight:normal;letter-spacing:-0.25px;">Lorenzo Gamboa Morant</div>
<div class="b" style="left:253px;top:668px;width:15px;height:20px;background:#f6f7f9"></div>
<div class="b" style="left:253px;top:688px;width:15px;height:1px;background:#a9b0b8"></div>
<div class="b" style="left:268px;top:668px;width:1px;height:21px;background:#aab1b9"></div>
<div class="b" style="left:269px;top:668px;width:959px;height:20px;background:#e1eaf5"></div>
<div class="b" style="left:269px;top:688px;width:959px;height:1px;background:#d3d7dd"></div>
<div class="b" style="left:343px;top:668px;width:1px;height:20px;background:#d5d9df"></div>
<div class="b" style="left:636px;top:668px;width:1px;height:20px;background:#d5d9df"></div>
<div class="b" style="left:772px;top:668px;width:1px;height:20px;background:#d5d9df"></div>
<div class="b" style="left:885px;top:668px;width:1px;height:20px;background:#d5d9df"></div>
<div class="b" style="left:300px;top:671px;width:13px;height:13px;background:linear-gradient(135deg,#dcdcdc,#f4f4f4);border:1px solid #a4a8ae;box-shadow:inset 0 0 0 1px #f8f8f8"></div>
<svg style="left:302px;top:673px" width="9" height="9" viewBox="0 0 9 9"><path d="M1.3 4.3L3.7 7.6L8.2 0.6" stroke="#404040" stroke-width="2.1" fill="none"/></svg>
<div class="t " style="left:347px;top:672.68px;font-size:11px;color:#1c1c24;font-weight:normal;letter-spacing:-0.1px;">Valencia, 220, ATICO 1</div>
<div class="t " style="left:640px;top:672.68px;font-size:11px;color:#1c1c24;font-weight:normal;letter-spacing:-0.2px;">Piso</div>
<div class="t " style="left:889px;top:672.68px;font-size:11px;color:#1c1c24;font-weight:normal;letter-spacing:-0.25px;">Roberto Muñiz Bejarano</div>
<div class="b" style="left:253px;top:689px;width:15px;height:20px;background:#f6f7f9"></div>
<div class="b" style="left:253px;top:709px;width:15px;height:1px;background:#a9b0b8"></div>
<div class="b" style="left:268px;top:689px;width:1px;height:21px;background:#aab1b9"></div>
<div class="b" style="left:269px;top:689px;width:959px;height:20px;background:#e1eaf5"></div>
<div class="b" style="left:269px;top:709px;width:959px;height:1px;background:#d3d7dd"></div>
<div class="b" style="left:343px;top:689px;width:1px;height:20px;background:#d5d9df"></div>
<div class="b" style="left:636px;top:689px;width:1px;height:20px;background:#d5d9df"></div>
<div class="b" style="left:772px;top:689px;width:1px;height:20px;background:#d5d9df"></div>
<div class="b" style="left:885px;top:689px;width:1px;height:20px;background:#d5d9df"></div>
<div class="b" style="left:300px;top:692px;width:13px;height:13px;background:linear-gradient(135deg,#dcdcdc,#f4f4f4);border:1px solid #a4a8ae;box-shadow:inset 0 0 0 1px #f8f8f8"></div>
<svg style="left:302px;top:694px" width="9" height="9" viewBox="0 0 9 9"><path d="M1.3 4.3L3.7 7.6L8.2 0.6" stroke="#404040" stroke-width="2.1" fill="none"/></svg>
<div class="t " style="left:347px;top:693.68px;font-size:11px;color:#1c1c24;font-weight:normal;letter-spacing:-0.1px;">Valencia, 220, ATICO 2</div>
<div class="t " style="left:640px;top:693.68px;font-size:11px;color:#1c1c24;font-weight:normal;letter-spacing:-0.2px;">Piso</div>
<div class="t " style="left:889px;top:693.68px;font-size:11px;color:#1c1c24;font-weight:normal;letter-spacing:-0.25px;">Verónica Mármol Hortelano</div>
<div class="b" style="left:253px;top:710px;width:15px;height:20px;background:#f6f7f9"></div>
<div class="b" style="left:253px;top:730px;width:15px;height:1px;background:#a9b0b8"></div>
<div class="b" style="left:268px;top:710px;width:1px;height:21px;background:#aab1b9"></div>
<div class="b" style="left:269px;top:710px;width:959px;height:20px;background:#e1eaf5"></div>
<div class="b" style="left:269px;top:730px;width:959px;height:1px;background:#d3d7dd"></div>
<div class="b" style="left:343px;top:710px;width:1px;height:20px;background:#d5d9df"></div>
<div class="b" style="left:636px;top:710px;width:1px;height:20px;background:#d5d9df"></div>
<div class="b" style="left:772px;top:710px;width:1px;height:20px;background:#d5d9df"></div>
<div class="b" style="left:885px;top:710px;width:1px;height:20px;background:#d5d9df"></div>
<div class="b" style="left:300px;top:713px;width:13px;height:13px;background:linear-gradient(135deg,#dcdcdc,#f4f4f4);border:1px solid #a4a8ae;box-shadow:inset 0 0 0 1px #f8f8f8"></div>
<svg style="left:302px;top:715px" width="9" height="9" viewBox="0 0 9 9"><path d="M1.3 4.3L3.7 7.6L8.2 0.6" stroke="#404040" stroke-width="2.1" fill="none"/></svg>
<div class="t " style="left:347px;top:714.68px;font-size:11px;color:#1c1c24;font-weight:normal;letter-spacing:-0.1px;">Valencia, 220 bis, LOCAL</div>
<div class="t " style="left:640px;top:714.68px;font-size:11px;color:#1c1c24;font-weight:normal;letter-spacing:-0.2px;">Local comercial</div>
<div class="t " style="left:889px;top:714.68px;font-size:11px;color:#1c1c24;font-weight:normal;letter-spacing:-0.25px;">Elena Fajardo Galisteo</div>
<div class="b" style="left:253px;top:731px;width:15px;height:20px;background:#f6f7f9"></div>
<div class="b" style="left:253px;top:751px;width:15px;height:1px;background:#a9b0b8"></div>
<div class="b" style="left:268px;top:731px;width:1px;height:21px;background:#aab1b9"></div>
<div class="b" style="left:269px;top:731px;width:959px;height:20px;background:#e1eaf5"></div>
<div class="b" style="left:269px;top:751px;width:959px;height:1px;background:#d3d7dd"></div>
<div class="b" style="left:343px;top:731px;width:1px;height:20px;background:#d5d9df"></div>
<div class="b" style="left:636px;top:731px;width:1px;height:20px;background:#d5d9df"></div>
<div class="b" style="left:772px;top:731px;width:1px;height:20px;background:#d5d9df"></div>
<div class="b" style="left:885px;top:731px;width:1px;height:20px;background:#d5d9df"></div>
<div class="b" style="left:300px;top:734px;width:13px;height:13px;background:linear-gradient(135deg,#dcdcdc,#f4f4f4);border:1px solid #a4a8ae;box-shadow:inset 0 0 0 1px #f8f8f8"></div>
<svg style="left:302px;top:736px" width="9" height="9" viewBox="0 0 9 9"><path d="M1.3 4.3L3.7 7.6L8.2 0.6" stroke="#404040" stroke-width="2.1" fill="none"/></svg>
<div class="t " style="left:347px;top:735.68px;font-size:11px;color:#1c1c24;font-weight:normal;letter-spacing:-0.1px;">Valencia, 220 bis, LOCAL</div>
<div class="t " style="left:640px;top:735.68px;font-size:11px;color:#1c1c24;font-weight:normal;letter-spacing:-0.2px;">Local comercial</div>
<div class="t " style="left:889px;top:735.68px;font-size:11px;color:#1c1c24;font-weight:normal;letter-spacing:-0.25px;">Daniel Salva Hoyos</div>
<div class="b" style="left:253px;top:752px;width:15px;height:20px;background:#f6f7f9"></div>
<div class="b" style="left:253px;top:772px;width:15px;height:1px;background:#a9b0b8"></div>
<div class="b" style="left:268px;top:752px;width:1px;height:21px;background:#aab1b9"></div>
<div class="b" style="left:269px;top:752px;width:959px;height:20px;background:#ffffff"></div>
<div class="b" style="left:269px;top:772px;width:959px;height:1px;background:#d3d7dd"></div>
<div class="b" style="left:343px;top:752px;width:1px;height:20px;background:#d5d9df"></div>
<div class="b" style="left:636px;top:752px;width:1px;height:20px;background:#d5d9df"></div>
<div class="b" style="left:772px;top:752px;width:1px;height:20px;background:#d5d9df"></div>
<div class="b" style="left:885px;top:752px;width:1px;height:20px;background:#d5d9df"></div>
<div class="b" style="left:300px;top:755px;width:13px;height:13px;background:linear-gradient(135deg,#dcdcdc,#f4f4f4);border:1px solid #a4a8ae;box-shadow:inset 0 0 0 1px #f8f8f8"></div>
<div class="t " style="left:347px;top:756.68px;font-size:11px;color:#1c1c24;font-weight:normal;letter-spacing:-0.1px;">Balmes, 121, LOCAL 1</div>
<div class="t " style="left:640px;top:756.68px;font-size:11px;color:#1c1c24;font-weight:normal;letter-spacing:-0.2px;">Local comercial</div>
<div class="t " style="left:889px;top:756.68px;font-size:11px;color:#1c1c24;font-weight:normal;letter-spacing:-0.25px;">Hector Priego Arrabal</div>
<svg style="left:259px;top:297px" width="5" height="8" viewBox="0 0 5 8"><path d="M0 0L4.5 4L0 8Z" fill="#6a707a"/></svg>
<div class="b" style="left:268px;top:290px;width:960px;height:20px;border:1px dotted #1a1a1a;border-right:none"></div>
<div class="b" style="left:387px;top:298px;width:180px;height:54px;background:#fdfdfd;border:1px solid #bfc3c8;box-shadow:1px 2px 3px rgba(0,0,0,0.18)"></div>
<div class="b" style="left:412px;top:299px;width:1px;height:52px;background:#e2e4e7"></div>
<div class="b" style="left:413px;top:325px;width:153px;height:1px;background:repeating-linear-gradient(90deg,#c8cace 0 2px,transparent 2px 3px)"></div>
<svg style="left:392px;top:304px" width="16" height="16" viewBox="0 0 16 16"><g transform="scale(1.0)"><defs><radialGradient id="rgcm" cx="0.4" cy="0.35" r="0.7"><stop offset="0" stop-color="#8be05a"/><stop offset="0.6" stop-color="#2da52a"/><stop offset="1" stop-color="#137a1a"/></radialGradient></defs><circle cx="8" cy="8" r="7.6" fill="url(#rgcm)" stroke="#1d7a1d" stroke-width="0.6"/><path d="M4.6 5.2A4.4 4.4 0 0 1 12.2 7.2" stroke="#f2ee70" stroke-width="2.3" fill="none"/><path d="M9.6 6.6H14.6L12.1 10.2Z" fill="#f2ee70"/><path d="M11.4 10.8A4.4 4.4 0 0 1 3.8 8.8" stroke="#eaf8dc" stroke-width="2.3" fill="none"/><path d="M6.4 9.4H1.4L3.9 5.8Z" fill="#eaf8dc"/></g></svg>
<div class="t " style="left:418px;top:305.84px;font-size:12px;color:#1c1c28;font-weight:normal;letter-spacing:0px;">Actualizar</div>
<svg style="left:392px;top:331px" width="16" height="16" viewBox="0 0 16 16"><g transform="scale(0.5)"><path d="M9.95 27.90A13.8 13.8 0 1 1 22.05 27.90" fill="none" stroke="#f7901e" stroke-width="3" stroke-linecap="round"/><path d="M12.34 23.72A9 9 0 1 1 19.66 23.72" fill="none" stroke="#e8452c" stroke-width="2.2" stroke-linecap="round"/><path d="M13.60 19.66A4.8 4.8 0 1 1 18.40 19.66" fill="none" stroke="#707070" stroke-width="1.6" stroke-linecap="round"/><rect x="15" y="15.5" width="2" height="15.5" fill="#8a8a8a"/><circle cx="16" cy="15.5" r="2" fill="#555"/></g></svg>
<div class="t " style="left:418px;top:332.84px;font-size:12px;color:#1c1c28;font-weight:normal;letter-spacing:0px;">Notificar masivamente</div>
<div class="b" style="left:387px;top:326px;width:180px;height:26px;border:2px solid #ec0b14"></div>
</body></html>
